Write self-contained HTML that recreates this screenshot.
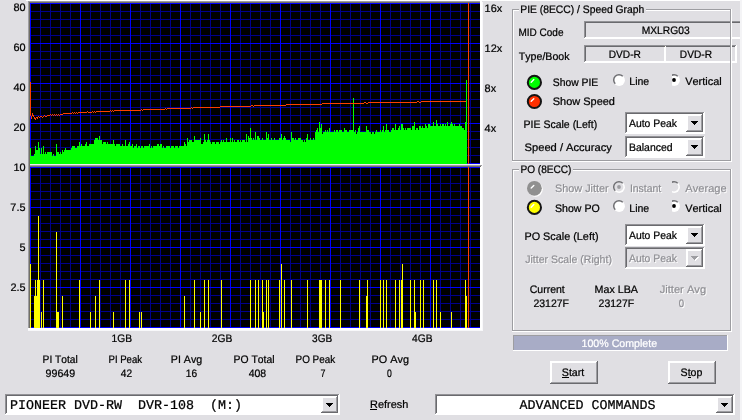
<!DOCTYPE html>
<html><head><meta charset="utf-8"><title>PIE / PO scan</title>
<style>
html,body{margin:0;padding:0;background:#e0dfe3;overflow:hidden}
body{width:742px;height:420px;position:relative;font-family:"Liberation Sans", sans-serif;}
svg{position:absolute;left:0;top:0;display:block;will-change:transform}
text{font-kerning:none;paint-order:stroke;stroke-width:0.24px;stroke:currentColor}
text.d{stroke-width:0.05px}
text.e{stroke-width:0.2px}
</style></head><body>
<svg width="742" height="420" viewBox="0 0 742 420" shape-rendering="crispEdges" text-rendering="geometricPrecision">
<rect x="26" y="0" width="716" height="1" fill="#ffffff"/>
<rect x="28" y="1" width="454" height="1" fill="#9d9da1"/>
<rect x="28" y="1" width="1" height="164" fill="#9d9da1"/>
<rect x="29" y="2" width="452" height="1" fill="#716f64"/>
<rect x="29" y="2" width="1" height="163" fill="#716f64"/>
<rect x="30" y="3" width="450" height="161" fill="#000000"/>
<rect x="30" y="11" width="450" height="1" fill="#00008c"/>
<rect x="30" y="19" width="450" height="1" fill="#00008c"/>
<rect x="30" y="27" width="450" height="1" fill="#00008c"/>
<rect x="30" y="35" width="450" height="1" fill="#00008c"/>
<rect x="30" y="51" width="450" height="1" fill="#00008c"/>
<rect x="30" y="59" width="450" height="1" fill="#00008c"/>
<rect x="30" y="67" width="450" height="1" fill="#00008c"/>
<rect x="30" y="75" width="450" height="1" fill="#00008c"/>
<rect x="30" y="91" width="450" height="1" fill="#00008c"/>
<rect x="30" y="99" width="450" height="1" fill="#00008c"/>
<rect x="30" y="107" width="450" height="1" fill="#00008c"/>
<rect x="30" y="115" width="450" height="1" fill="#00008c"/>
<rect x="30" y="131" width="450" height="1" fill="#00008c"/>
<rect x="30" y="139" width="450" height="1" fill="#00008c"/>
<rect x="30" y="147" width="450" height="1" fill="#00008c"/>
<rect x="30" y="155" width="450" height="1" fill="#00008c"/>
<rect x="40" y="3" width="1" height="161" fill="#00008c"/>
<rect x="50" y="3" width="1" height="161" fill="#00008c"/>
<rect x="60" y="3" width="1" height="161" fill="#00008c"/>
<rect x="70" y="3" width="1" height="161" fill="#00008c"/>
<rect x="90" y="3" width="1" height="161" fill="#00008c"/>
<rect x="100" y="3" width="1" height="161" fill="#00008c"/>
<rect x="110" y="3" width="1" height="161" fill="#00008c"/>
<rect x="120" y="3" width="1" height="161" fill="#00008c"/>
<rect x="140" y="3" width="1" height="161" fill="#00008c"/>
<rect x="150" y="3" width="1" height="161" fill="#00008c"/>
<rect x="160" y="3" width="1" height="161" fill="#00008c"/>
<rect x="170" y="3" width="1" height="161" fill="#00008c"/>
<rect x="190" y="3" width="1" height="161" fill="#00008c"/>
<rect x="200" y="3" width="1" height="161" fill="#00008c"/>
<rect x="210" y="3" width="1" height="161" fill="#00008c"/>
<rect x="220" y="3" width="1" height="161" fill="#00008c"/>
<rect x="240" y="3" width="1" height="161" fill="#00008c"/>
<rect x="250" y="3" width="1" height="161" fill="#00008c"/>
<rect x="260" y="3" width="1" height="161" fill="#00008c"/>
<rect x="270" y="3" width="1" height="161" fill="#00008c"/>
<rect x="290" y="3" width="1" height="161" fill="#00008c"/>
<rect x="300" y="3" width="1" height="161" fill="#00008c"/>
<rect x="310" y="3" width="1" height="161" fill="#00008c"/>
<rect x="320" y="3" width="1" height="161" fill="#00008c"/>
<rect x="340" y="3" width="1" height="161" fill="#00008c"/>
<rect x="350" y="3" width="1" height="161" fill="#00008c"/>
<rect x="360" y="3" width="1" height="161" fill="#00008c"/>
<rect x="370" y="3" width="1" height="161" fill="#00008c"/>
<rect x="390" y="3" width="1" height="161" fill="#00008c"/>
<rect x="400" y="3" width="1" height="161" fill="#00008c"/>
<rect x="410" y="3" width="1" height="161" fill="#00008c"/>
<rect x="420" y="3" width="1" height="161" fill="#00008c"/>
<rect x="440" y="3" width="1" height="161" fill="#00008c"/>
<rect x="450" y="3" width="1" height="161" fill="#00008c"/>
<rect x="460" y="3" width="1" height="161" fill="#00008c"/>
<rect x="470" y="3" width="1" height="161" fill="#00008c"/>
<rect x="30" y="3" width="450" height="1" fill="#0000ff"/>
<rect x="30" y="43" width="450" height="1" fill="#0000ff"/>
<rect x="30" y="83" width="450" height="1" fill="#0000ff"/>
<rect x="30" y="123" width="450" height="1" fill="#0000ff"/>
<rect x="30" y="163" width="450" height="1" fill="#0000ff"/>
<rect x="30" y="3" width="1" height="161" fill="#0000ff"/>
<rect x="80" y="3" width="1" height="161" fill="#0000ff"/>
<rect x="130" y="3" width="1" height="161" fill="#0000ff"/>
<rect x="180" y="3" width="1" height="161" fill="#0000ff"/>
<rect x="230" y="3" width="1" height="161" fill="#0000ff"/>
<rect x="280" y="3" width="1" height="161" fill="#0000ff"/>
<rect x="330" y="3" width="1" height="161" fill="#0000ff"/>
<rect x="380" y="3" width="1" height="161" fill="#0000ff"/>
<rect x="430" y="3" width="1" height="161" fill="#0000ff"/>
<rect x="28" y="165" width="454" height="1" fill="#9d9da1"/>
<rect x="28" y="165" width="1" height="164" fill="#9d9da1"/>
<rect x="29" y="166" width="452" height="1" fill="#716f64"/>
<rect x="29" y="166" width="1" height="163" fill="#716f64"/>
<rect x="30" y="167" width="450" height="161" fill="#000000"/>
<rect x="30" y="175" width="450" height="1" fill="#00008c"/>
<rect x="30" y="183" width="450" height="1" fill="#00008c"/>
<rect x="30" y="191" width="450" height="1" fill="#00008c"/>
<rect x="30" y="199" width="450" height="1" fill="#00008c"/>
<rect x="30" y="215" width="450" height="1" fill="#00008c"/>
<rect x="30" y="223" width="450" height="1" fill="#00008c"/>
<rect x="30" y="231" width="450" height="1" fill="#00008c"/>
<rect x="30" y="239" width="450" height="1" fill="#00008c"/>
<rect x="30" y="255" width="450" height="1" fill="#00008c"/>
<rect x="30" y="263" width="450" height="1" fill="#00008c"/>
<rect x="30" y="271" width="450" height="1" fill="#00008c"/>
<rect x="30" y="279" width="450" height="1" fill="#00008c"/>
<rect x="30" y="295" width="450" height="1" fill="#00008c"/>
<rect x="30" y="303" width="450" height="1" fill="#00008c"/>
<rect x="30" y="311" width="450" height="1" fill="#00008c"/>
<rect x="30" y="319" width="450" height="1" fill="#00008c"/>
<rect x="40" y="167" width="1" height="161" fill="#00008c"/>
<rect x="50" y="167" width="1" height="161" fill="#00008c"/>
<rect x="60" y="167" width="1" height="161" fill="#00008c"/>
<rect x="70" y="167" width="1" height="161" fill="#00008c"/>
<rect x="90" y="167" width="1" height="161" fill="#00008c"/>
<rect x="100" y="167" width="1" height="161" fill="#00008c"/>
<rect x="110" y="167" width="1" height="161" fill="#00008c"/>
<rect x="120" y="167" width="1" height="161" fill="#00008c"/>
<rect x="140" y="167" width="1" height="161" fill="#00008c"/>
<rect x="150" y="167" width="1" height="161" fill="#00008c"/>
<rect x="160" y="167" width="1" height="161" fill="#00008c"/>
<rect x="170" y="167" width="1" height="161" fill="#00008c"/>
<rect x="190" y="167" width="1" height="161" fill="#00008c"/>
<rect x="200" y="167" width="1" height="161" fill="#00008c"/>
<rect x="210" y="167" width="1" height="161" fill="#00008c"/>
<rect x="220" y="167" width="1" height="161" fill="#00008c"/>
<rect x="240" y="167" width="1" height="161" fill="#00008c"/>
<rect x="250" y="167" width="1" height="161" fill="#00008c"/>
<rect x="260" y="167" width="1" height="161" fill="#00008c"/>
<rect x="270" y="167" width="1" height="161" fill="#00008c"/>
<rect x="290" y="167" width="1" height="161" fill="#00008c"/>
<rect x="300" y="167" width="1" height="161" fill="#00008c"/>
<rect x="310" y="167" width="1" height="161" fill="#00008c"/>
<rect x="320" y="167" width="1" height="161" fill="#00008c"/>
<rect x="340" y="167" width="1" height="161" fill="#00008c"/>
<rect x="350" y="167" width="1" height="161" fill="#00008c"/>
<rect x="360" y="167" width="1" height="161" fill="#00008c"/>
<rect x="370" y="167" width="1" height="161" fill="#00008c"/>
<rect x="390" y="167" width="1" height="161" fill="#00008c"/>
<rect x="400" y="167" width="1" height="161" fill="#00008c"/>
<rect x="410" y="167" width="1" height="161" fill="#00008c"/>
<rect x="420" y="167" width="1" height="161" fill="#00008c"/>
<rect x="440" y="167" width="1" height="161" fill="#00008c"/>
<rect x="450" y="167" width="1" height="161" fill="#00008c"/>
<rect x="460" y="167" width="1" height="161" fill="#00008c"/>
<rect x="470" y="167" width="1" height="161" fill="#00008c"/>
<rect x="30" y="167" width="450" height="1" fill="#0000ff"/>
<rect x="30" y="207" width="450" height="1" fill="#0000ff"/>
<rect x="30" y="247" width="450" height="1" fill="#0000ff"/>
<rect x="30" y="287" width="450" height="1" fill="#0000ff"/>
<rect x="30" y="327" width="450" height="1" fill="#0000ff"/>
<rect x="30" y="167" width="1" height="161" fill="#0000ff"/>
<rect x="80" y="167" width="1" height="161" fill="#0000ff"/>
<rect x="130" y="167" width="1" height="161" fill="#0000ff"/>
<rect x="180" y="167" width="1" height="161" fill="#0000ff"/>
<rect x="230" y="167" width="1" height="161" fill="#0000ff"/>
<rect x="280" y="167" width="1" height="161" fill="#0000ff"/>
<rect x="330" y="167" width="1" height="161" fill="#0000ff"/>
<rect x="380" y="167" width="1" height="161" fill="#0000ff"/>
<rect x="430" y="167" width="1" height="161" fill="#0000ff"/>
<rect x="480" y="1" width="2" height="330" fill="#ffffff"/>
<rect x="482" y="2" width="1" height="329" fill="#f8f8fa"/>
<rect x="28" y="330" width="455" height="1" fill="#f8f8fa"/>
<rect x="30" y="164" width="450" height="1" fill="#ececee"/>
<rect x="480" y="165" width="2" height="1" fill="#9d9da1"/>
<rect x="480" y="166" width="1" height="1" fill="#716f64"/>
<rect x="28" y="1" width="1" height="328" fill="#9d9da1"/>
<rect x="29" y="2" width="1" height="326" fill="#716f64"/>
<rect x="28" y="328" width="454" height="2" fill="#ffffff"/>
<rect x="30" y="148" width="1" height="16" fill="#00ff00"/>
<rect x="31" y="156" width="1" height="8" fill="#00ff00"/>
<rect x="32" y="156" width="1" height="8" fill="#00ff00"/>
<rect x="33" y="156" width="1" height="8" fill="#00ff00"/>
<rect x="34" y="154" width="1" height="10" fill="#00ff00"/>
<rect x="35" y="146" width="1" height="18" fill="#00ff00"/>
<rect x="36" y="150" width="1" height="14" fill="#00ff00"/>
<rect x="37" y="150" width="1" height="14" fill="#00ff00"/>
<rect x="38" y="142" width="1" height="22" fill="#00ff00"/>
<rect x="39" y="148" width="1" height="16" fill="#00ff00"/>
<rect x="40" y="154" width="1" height="10" fill="#00ff00"/>
<rect x="41" y="148" width="1" height="16" fill="#00ff00"/>
<rect x="42" y="154" width="1" height="10" fill="#00ff00"/>
<rect x="43" y="146" width="1" height="18" fill="#00ff00"/>
<rect x="44" y="154" width="1" height="10" fill="#00ff00"/>
<rect x="45" y="152" width="1" height="12" fill="#00ff00"/>
<rect x="46" y="154" width="1" height="10" fill="#00ff00"/>
<rect x="47" y="152" width="1" height="12" fill="#00ff00"/>
<rect x="48" y="152" width="1" height="12" fill="#00ff00"/>
<rect x="49" y="152" width="1" height="12" fill="#00ff00"/>
<rect x="50" y="152" width="1" height="12" fill="#00ff00"/>
<rect x="51" y="152" width="1" height="12" fill="#00ff00"/>
<rect x="52" y="156" width="1" height="8" fill="#00ff00"/>
<rect x="53" y="154" width="1" height="10" fill="#00ff00"/>
<rect x="54" y="156" width="1" height="8" fill="#00ff00"/>
<rect x="55" y="156" width="1" height="8" fill="#00ff00"/>
<rect x="56" y="144" width="1" height="20" fill="#00ff00"/>
<rect x="57" y="152" width="1" height="12" fill="#00ff00"/>
<rect x="58" y="152" width="1" height="12" fill="#00ff00"/>
<rect x="59" y="154" width="1" height="10" fill="#00ff00"/>
<rect x="60" y="152" width="1" height="12" fill="#00ff00"/>
<rect x="61" y="154" width="1" height="10" fill="#00ff00"/>
<rect x="62" y="150" width="1" height="14" fill="#00ff00"/>
<rect x="63" y="152" width="1" height="12" fill="#00ff00"/>
<rect x="64" y="150" width="1" height="14" fill="#00ff00"/>
<rect x="65" y="148" width="1" height="16" fill="#00ff00"/>
<rect x="66" y="150" width="1" height="14" fill="#00ff00"/>
<rect x="67" y="150" width="1" height="14" fill="#00ff00"/>
<rect x="68" y="150" width="1" height="14" fill="#00ff00"/>
<rect x="69" y="150" width="1" height="14" fill="#00ff00"/>
<rect x="70" y="150" width="1" height="14" fill="#00ff00"/>
<rect x="71" y="148" width="1" height="16" fill="#00ff00"/>
<rect x="72" y="146" width="1" height="18" fill="#00ff00"/>
<rect x="73" y="146" width="1" height="18" fill="#00ff00"/>
<rect x="74" y="146" width="1" height="18" fill="#00ff00"/>
<rect x="75" y="148" width="1" height="16" fill="#00ff00"/>
<rect x="76" y="148" width="1" height="16" fill="#00ff00"/>
<rect x="77" y="146" width="1" height="18" fill="#00ff00"/>
<rect x="78" y="146" width="1" height="18" fill="#00ff00"/>
<rect x="79" y="142" width="1" height="22" fill="#00ff00"/>
<rect x="80" y="146" width="1" height="18" fill="#00ff00"/>
<rect x="81" y="144" width="1" height="20" fill="#00ff00"/>
<rect x="82" y="146" width="1" height="18" fill="#00ff00"/>
<rect x="83" y="146" width="1" height="18" fill="#00ff00"/>
<rect x="84" y="146" width="1" height="18" fill="#00ff00"/>
<rect x="85" y="144" width="1" height="20" fill="#00ff00"/>
<rect x="86" y="142" width="1" height="22" fill="#00ff00"/>
<rect x="87" y="146" width="1" height="18" fill="#00ff00"/>
<rect x="88" y="146" width="1" height="18" fill="#00ff00"/>
<rect x="89" y="144" width="1" height="20" fill="#00ff00"/>
<rect x="90" y="144" width="1" height="20" fill="#00ff00"/>
<rect x="91" y="144" width="1" height="20" fill="#00ff00"/>
<rect x="92" y="144" width="1" height="20" fill="#00ff00"/>
<rect x="93" y="144" width="1" height="20" fill="#00ff00"/>
<rect x="94" y="140" width="1" height="24" fill="#00ff00"/>
<rect x="95" y="138" width="1" height="26" fill="#00ff00"/>
<rect x="96" y="138" width="1" height="26" fill="#00ff00"/>
<rect x="97" y="138" width="1" height="26" fill="#00ff00"/>
<rect x="98" y="140" width="1" height="24" fill="#00ff00"/>
<rect x="99" y="136" width="1" height="28" fill="#00ff00"/>
<rect x="100" y="140" width="1" height="24" fill="#00ff00"/>
<rect x="101" y="140" width="1" height="24" fill="#00ff00"/>
<rect x="102" y="144" width="1" height="20" fill="#00ff00"/>
<rect x="103" y="142" width="1" height="22" fill="#00ff00"/>
<rect x="104" y="142" width="1" height="22" fill="#00ff00"/>
<rect x="105" y="142" width="1" height="22" fill="#00ff00"/>
<rect x="106" y="144" width="1" height="20" fill="#00ff00"/>
<rect x="107" y="142" width="1" height="22" fill="#00ff00"/>
<rect x="108" y="144" width="1" height="20" fill="#00ff00"/>
<rect x="109" y="144" width="1" height="20" fill="#00ff00"/>
<rect x="110" y="144" width="1" height="20" fill="#00ff00"/>
<rect x="111" y="144" width="1" height="20" fill="#00ff00"/>
<rect x="112" y="144" width="1" height="20" fill="#00ff00"/>
<rect x="113" y="140" width="1" height="24" fill="#00ff00"/>
<rect x="114" y="144" width="1" height="20" fill="#00ff00"/>
<rect x="115" y="146" width="1" height="18" fill="#00ff00"/>
<rect x="116" y="144" width="1" height="20" fill="#00ff00"/>
<rect x="117" y="144" width="1" height="20" fill="#00ff00"/>
<rect x="118" y="144" width="1" height="20" fill="#00ff00"/>
<rect x="119" y="144" width="1" height="20" fill="#00ff00"/>
<rect x="120" y="146" width="1" height="18" fill="#00ff00"/>
<rect x="121" y="146" width="1" height="18" fill="#00ff00"/>
<rect x="122" y="144" width="1" height="20" fill="#00ff00"/>
<rect x="123" y="146" width="1" height="18" fill="#00ff00"/>
<rect x="124" y="146" width="1" height="18" fill="#00ff00"/>
<rect x="125" y="140" width="1" height="24" fill="#00ff00"/>
<rect x="126" y="146" width="1" height="18" fill="#00ff00"/>
<rect x="127" y="146" width="1" height="18" fill="#00ff00"/>
<rect x="128" y="144" width="1" height="20" fill="#00ff00"/>
<rect x="129" y="142" width="1" height="22" fill="#00ff00"/>
<rect x="130" y="146" width="1" height="18" fill="#00ff00"/>
<rect x="131" y="146" width="1" height="18" fill="#00ff00"/>
<rect x="132" y="144" width="1" height="20" fill="#00ff00"/>
<rect x="133" y="148" width="1" height="16" fill="#00ff00"/>
<rect x="134" y="146" width="1" height="18" fill="#00ff00"/>
<rect x="135" y="146" width="1" height="18" fill="#00ff00"/>
<rect x="136" y="144" width="1" height="20" fill="#00ff00"/>
<rect x="137" y="148" width="1" height="16" fill="#00ff00"/>
<rect x="138" y="146" width="1" height="18" fill="#00ff00"/>
<rect x="139" y="146" width="1" height="18" fill="#00ff00"/>
<rect x="140" y="148" width="1" height="16" fill="#00ff00"/>
<rect x="141" y="146" width="1" height="18" fill="#00ff00"/>
<rect x="142" y="146" width="1" height="18" fill="#00ff00"/>
<rect x="143" y="148" width="1" height="16" fill="#00ff00"/>
<rect x="144" y="146" width="1" height="18" fill="#00ff00"/>
<rect x="145" y="146" width="1" height="18" fill="#00ff00"/>
<rect x="146" y="146" width="1" height="18" fill="#00ff00"/>
<rect x="147" y="146" width="1" height="18" fill="#00ff00"/>
<rect x="148" y="146" width="1" height="18" fill="#00ff00"/>
<rect x="149" y="144" width="1" height="20" fill="#00ff00"/>
<rect x="150" y="148" width="1" height="16" fill="#00ff00"/>
<rect x="151" y="146" width="1" height="18" fill="#00ff00"/>
<rect x="152" y="148" width="1" height="16" fill="#00ff00"/>
<rect x="153" y="146" width="1" height="18" fill="#00ff00"/>
<rect x="154" y="146" width="1" height="18" fill="#00ff00"/>
<rect x="155" y="146" width="1" height="18" fill="#00ff00"/>
<rect x="156" y="146" width="1" height="18" fill="#00ff00"/>
<rect x="157" y="144" width="1" height="20" fill="#00ff00"/>
<rect x="158" y="144" width="1" height="20" fill="#00ff00"/>
<rect x="159" y="146" width="1" height="18" fill="#00ff00"/>
<rect x="160" y="144" width="1" height="20" fill="#00ff00"/>
<rect x="161" y="144" width="1" height="20" fill="#00ff00"/>
<rect x="162" y="148" width="1" height="16" fill="#00ff00"/>
<rect x="163" y="146" width="1" height="18" fill="#00ff00"/>
<rect x="164" y="148" width="1" height="16" fill="#00ff00"/>
<rect x="165" y="148" width="1" height="16" fill="#00ff00"/>
<rect x="166" y="146" width="1" height="18" fill="#00ff00"/>
<rect x="167" y="146" width="1" height="18" fill="#00ff00"/>
<rect x="168" y="146" width="1" height="18" fill="#00ff00"/>
<rect x="169" y="146" width="1" height="18" fill="#00ff00"/>
<rect x="170" y="148" width="1" height="16" fill="#00ff00"/>
<rect x="171" y="146" width="1" height="18" fill="#00ff00"/>
<rect x="172" y="146" width="1" height="18" fill="#00ff00"/>
<rect x="173" y="146" width="1" height="18" fill="#00ff00"/>
<rect x="174" y="148" width="1" height="16" fill="#00ff00"/>
<rect x="175" y="146" width="1" height="18" fill="#00ff00"/>
<rect x="176" y="146" width="1" height="18" fill="#00ff00"/>
<rect x="177" y="146" width="1" height="18" fill="#00ff00"/>
<rect x="178" y="148" width="1" height="16" fill="#00ff00"/>
<rect x="179" y="146" width="1" height="18" fill="#00ff00"/>
<rect x="180" y="146" width="1" height="18" fill="#00ff00"/>
<rect x="181" y="146" width="1" height="18" fill="#00ff00"/>
<rect x="182" y="146" width="1" height="18" fill="#00ff00"/>
<rect x="183" y="146" width="1" height="18" fill="#00ff00"/>
<rect x="184" y="142" width="1" height="22" fill="#00ff00"/>
<rect x="185" y="144" width="1" height="20" fill="#00ff00"/>
<rect x="186" y="146" width="1" height="18" fill="#00ff00"/>
<rect x="187" y="138" width="1" height="26" fill="#00ff00"/>
<rect x="188" y="142" width="1" height="22" fill="#00ff00"/>
<rect x="189" y="140" width="1" height="24" fill="#00ff00"/>
<rect x="190" y="140" width="1" height="24" fill="#00ff00"/>
<rect x="191" y="140" width="1" height="24" fill="#00ff00"/>
<rect x="192" y="142" width="1" height="22" fill="#00ff00"/>
<rect x="193" y="142" width="1" height="22" fill="#00ff00"/>
<rect x="194" y="136" width="1" height="28" fill="#00ff00"/>
<rect x="195" y="140" width="1" height="24" fill="#00ff00"/>
<rect x="196" y="140" width="1" height="24" fill="#00ff00"/>
<rect x="197" y="140" width="1" height="24" fill="#00ff00"/>
<rect x="198" y="140" width="1" height="24" fill="#00ff00"/>
<rect x="199" y="140" width="1" height="24" fill="#00ff00"/>
<rect x="200" y="138" width="1" height="26" fill="#00ff00"/>
<rect x="201" y="144" width="1" height="20" fill="#00ff00"/>
<rect x="202" y="144" width="1" height="20" fill="#00ff00"/>
<rect x="203" y="142" width="1" height="22" fill="#00ff00"/>
<rect x="204" y="134" width="1" height="30" fill="#00ff00"/>
<rect x="205" y="140" width="1" height="24" fill="#00ff00"/>
<rect x="206" y="142" width="1" height="22" fill="#00ff00"/>
<rect x="207" y="140" width="1" height="24" fill="#00ff00"/>
<rect x="208" y="134" width="1" height="30" fill="#00ff00"/>
<rect x="209" y="140" width="1" height="24" fill="#00ff00"/>
<rect x="210" y="142" width="1" height="22" fill="#00ff00"/>
<rect x="211" y="144" width="1" height="20" fill="#00ff00"/>
<rect x="212" y="142" width="1" height="22" fill="#00ff00"/>
<rect x="213" y="142" width="1" height="22" fill="#00ff00"/>
<rect x="214" y="142" width="1" height="22" fill="#00ff00"/>
<rect x="215" y="144" width="1" height="20" fill="#00ff00"/>
<rect x="216" y="142" width="1" height="22" fill="#00ff00"/>
<rect x="217" y="142" width="1" height="22" fill="#00ff00"/>
<rect x="218" y="142" width="1" height="22" fill="#00ff00"/>
<rect x="219" y="144" width="1" height="20" fill="#00ff00"/>
<rect x="220" y="142" width="1" height="22" fill="#00ff00"/>
<rect x="221" y="140" width="1" height="24" fill="#00ff00"/>
<rect x="222" y="142" width="1" height="22" fill="#00ff00"/>
<rect x="223" y="140" width="1" height="24" fill="#00ff00"/>
<rect x="224" y="142" width="1" height="22" fill="#00ff00"/>
<rect x="225" y="142" width="1" height="22" fill="#00ff00"/>
<rect x="226" y="138" width="1" height="26" fill="#00ff00"/>
<rect x="227" y="142" width="1" height="22" fill="#00ff00"/>
<rect x="228" y="142" width="1" height="22" fill="#00ff00"/>
<rect x="229" y="142" width="1" height="22" fill="#00ff00"/>
<rect x="230" y="138" width="1" height="26" fill="#00ff00"/>
<rect x="231" y="142" width="1" height="22" fill="#00ff00"/>
<rect x="232" y="138" width="1" height="26" fill="#00ff00"/>
<rect x="233" y="142" width="1" height="22" fill="#00ff00"/>
<rect x="234" y="140" width="1" height="24" fill="#00ff00"/>
<rect x="235" y="142" width="1" height="22" fill="#00ff00"/>
<rect x="236" y="142" width="1" height="22" fill="#00ff00"/>
<rect x="237" y="140" width="1" height="24" fill="#00ff00"/>
<rect x="238" y="140" width="1" height="24" fill="#00ff00"/>
<rect x="239" y="142" width="1" height="22" fill="#00ff00"/>
<rect x="240" y="140" width="1" height="24" fill="#00ff00"/>
<rect x="241" y="142" width="1" height="22" fill="#00ff00"/>
<rect x="242" y="140" width="1" height="24" fill="#00ff00"/>
<rect x="243" y="140" width="1" height="24" fill="#00ff00"/>
<rect x="244" y="140" width="1" height="24" fill="#00ff00"/>
<rect x="245" y="142" width="1" height="22" fill="#00ff00"/>
<rect x="246" y="134" width="1" height="30" fill="#00ff00"/>
<rect x="247" y="142" width="1" height="22" fill="#00ff00"/>
<rect x="248" y="136" width="1" height="28" fill="#00ff00"/>
<rect x="249" y="138" width="1" height="26" fill="#00ff00"/>
<rect x="250" y="128" width="1" height="36" fill="#00ff00"/>
<rect x="251" y="138" width="1" height="26" fill="#00ff00"/>
<rect x="252" y="140" width="1" height="24" fill="#00ff00"/>
<rect x="253" y="138" width="1" height="26" fill="#00ff00"/>
<rect x="254" y="140" width="1" height="24" fill="#00ff00"/>
<rect x="255" y="132" width="1" height="32" fill="#00ff00"/>
<rect x="256" y="140" width="1" height="24" fill="#00ff00"/>
<rect x="257" y="136" width="1" height="28" fill="#00ff00"/>
<rect x="258" y="136" width="1" height="28" fill="#00ff00"/>
<rect x="259" y="138" width="1" height="26" fill="#00ff00"/>
<rect x="260" y="140" width="1" height="24" fill="#00ff00"/>
<rect x="261" y="140" width="1" height="24" fill="#00ff00"/>
<rect x="262" y="138" width="1" height="26" fill="#00ff00"/>
<rect x="263" y="140" width="1" height="24" fill="#00ff00"/>
<rect x="264" y="140" width="1" height="24" fill="#00ff00"/>
<rect x="265" y="140" width="1" height="24" fill="#00ff00"/>
<rect x="266" y="132" width="1" height="32" fill="#00ff00"/>
<rect x="267" y="138" width="1" height="26" fill="#00ff00"/>
<rect x="268" y="134" width="1" height="30" fill="#00ff00"/>
<rect x="269" y="140" width="1" height="24" fill="#00ff00"/>
<rect x="270" y="140" width="1" height="24" fill="#00ff00"/>
<rect x="271" y="138" width="1" height="26" fill="#00ff00"/>
<rect x="272" y="140" width="1" height="24" fill="#00ff00"/>
<rect x="273" y="140" width="1" height="24" fill="#00ff00"/>
<rect x="274" y="138" width="1" height="26" fill="#00ff00"/>
<rect x="275" y="140" width="1" height="24" fill="#00ff00"/>
<rect x="276" y="140" width="1" height="24" fill="#00ff00"/>
<rect x="277" y="140" width="1" height="24" fill="#00ff00"/>
<rect x="278" y="140" width="1" height="24" fill="#00ff00"/>
<rect x="279" y="138" width="1" height="26" fill="#00ff00"/>
<rect x="280" y="138" width="1" height="26" fill="#00ff00"/>
<rect x="281" y="134" width="1" height="30" fill="#00ff00"/>
<rect x="282" y="140" width="1" height="24" fill="#00ff00"/>
<rect x="283" y="138" width="1" height="26" fill="#00ff00"/>
<rect x="284" y="136" width="1" height="28" fill="#00ff00"/>
<rect x="285" y="138" width="1" height="26" fill="#00ff00"/>
<rect x="286" y="140" width="1" height="24" fill="#00ff00"/>
<rect x="287" y="140" width="1" height="24" fill="#00ff00"/>
<rect x="288" y="140" width="1" height="24" fill="#00ff00"/>
<rect x="289" y="140" width="1" height="24" fill="#00ff00"/>
<rect x="290" y="142" width="1" height="22" fill="#00ff00"/>
<rect x="291" y="132" width="1" height="32" fill="#00ff00"/>
<rect x="292" y="138" width="1" height="26" fill="#00ff00"/>
<rect x="293" y="138" width="1" height="26" fill="#00ff00"/>
<rect x="294" y="140" width="1" height="24" fill="#00ff00"/>
<rect x="295" y="138" width="1" height="26" fill="#00ff00"/>
<rect x="296" y="140" width="1" height="24" fill="#00ff00"/>
<rect x="297" y="140" width="1" height="24" fill="#00ff00"/>
<rect x="298" y="138" width="1" height="26" fill="#00ff00"/>
<rect x="299" y="138" width="1" height="26" fill="#00ff00"/>
<rect x="300" y="138" width="1" height="26" fill="#00ff00"/>
<rect x="301" y="140" width="1" height="24" fill="#00ff00"/>
<rect x="302" y="140" width="1" height="24" fill="#00ff00"/>
<rect x="303" y="142" width="1" height="22" fill="#00ff00"/>
<rect x="304" y="140" width="1" height="24" fill="#00ff00"/>
<rect x="305" y="142" width="1" height="22" fill="#00ff00"/>
<rect x="306" y="138" width="1" height="26" fill="#00ff00"/>
<rect x="307" y="134" width="1" height="30" fill="#00ff00"/>
<rect x="308" y="140" width="1" height="24" fill="#00ff00"/>
<rect x="309" y="140" width="1" height="24" fill="#00ff00"/>
<rect x="310" y="138" width="1" height="26" fill="#00ff00"/>
<rect x="311" y="140" width="1" height="24" fill="#00ff00"/>
<rect x="312" y="140" width="1" height="24" fill="#00ff00"/>
<rect x="313" y="138" width="1" height="26" fill="#00ff00"/>
<rect x="314" y="140" width="1" height="24" fill="#00ff00"/>
<rect x="315" y="132" width="1" height="32" fill="#00ff00"/>
<rect x="316" y="130" width="1" height="34" fill="#00ff00"/>
<rect x="317" y="128" width="1" height="36" fill="#00ff00"/>
<rect x="318" y="132" width="1" height="32" fill="#00ff00"/>
<rect x="319" y="122" width="1" height="42" fill="#00ff00"/>
<rect x="320" y="128" width="1" height="36" fill="#00ff00"/>
<rect x="321" y="124" width="1" height="40" fill="#00ff00"/>
<rect x="322" y="134" width="1" height="30" fill="#00ff00"/>
<rect x="323" y="132" width="1" height="32" fill="#00ff00"/>
<rect x="324" y="132" width="1" height="32" fill="#00ff00"/>
<rect x="325" y="130" width="1" height="34" fill="#00ff00"/>
<rect x="326" y="132" width="1" height="32" fill="#00ff00"/>
<rect x="327" y="130" width="1" height="34" fill="#00ff00"/>
<rect x="328" y="132" width="1" height="32" fill="#00ff00"/>
<rect x="329" y="128" width="1" height="36" fill="#00ff00"/>
<rect x="330" y="132" width="1" height="32" fill="#00ff00"/>
<rect x="331" y="132" width="1" height="32" fill="#00ff00"/>
<rect x="332" y="132" width="1" height="32" fill="#00ff00"/>
<rect x="333" y="132" width="1" height="32" fill="#00ff00"/>
<rect x="334" y="130" width="1" height="34" fill="#00ff00"/>
<rect x="335" y="132" width="1" height="32" fill="#00ff00"/>
<rect x="336" y="130" width="1" height="34" fill="#00ff00"/>
<rect x="337" y="130" width="1" height="34" fill="#00ff00"/>
<rect x="338" y="132" width="1" height="32" fill="#00ff00"/>
<rect x="339" y="130" width="1" height="34" fill="#00ff00"/>
<rect x="340" y="130" width="1" height="34" fill="#00ff00"/>
<rect x="341" y="130" width="1" height="34" fill="#00ff00"/>
<rect x="342" y="132" width="1" height="32" fill="#00ff00"/>
<rect x="343" y="132" width="1" height="32" fill="#00ff00"/>
<rect x="344" y="128" width="1" height="36" fill="#00ff00"/>
<rect x="345" y="130" width="1" height="34" fill="#00ff00"/>
<rect x="346" y="130" width="1" height="34" fill="#00ff00"/>
<rect x="347" y="132" width="1" height="32" fill="#00ff00"/>
<rect x="348" y="132" width="1" height="32" fill="#00ff00"/>
<rect x="349" y="130" width="1" height="34" fill="#00ff00"/>
<rect x="350" y="130" width="1" height="34" fill="#00ff00"/>
<rect x="351" y="130" width="1" height="34" fill="#00ff00"/>
<rect x="352" y="130" width="1" height="34" fill="#00ff00"/>
<rect x="353" y="98" width="1" height="66" fill="#00ff00"/>
<rect x="354" y="132" width="1" height="32" fill="#00ff00"/>
<rect x="355" y="130" width="1" height="34" fill="#00ff00"/>
<rect x="356" y="134" width="1" height="30" fill="#00ff00"/>
<rect x="357" y="132" width="1" height="32" fill="#00ff00"/>
<rect x="358" y="128" width="1" height="36" fill="#00ff00"/>
<rect x="359" y="126" width="1" height="38" fill="#00ff00"/>
<rect x="360" y="132" width="1" height="32" fill="#00ff00"/>
<rect x="361" y="132" width="1" height="32" fill="#00ff00"/>
<rect x="362" y="132" width="1" height="32" fill="#00ff00"/>
<rect x="363" y="132" width="1" height="32" fill="#00ff00"/>
<rect x="364" y="132" width="1" height="32" fill="#00ff00"/>
<rect x="365" y="132" width="1" height="32" fill="#00ff00"/>
<rect x="366" y="126" width="1" height="38" fill="#00ff00"/>
<rect x="367" y="130" width="1" height="34" fill="#00ff00"/>
<rect x="368" y="130" width="1" height="34" fill="#00ff00"/>
<rect x="369" y="132" width="1" height="32" fill="#00ff00"/>
<rect x="370" y="132" width="1" height="32" fill="#00ff00"/>
<rect x="371" y="134" width="1" height="30" fill="#00ff00"/>
<rect x="372" y="132" width="1" height="32" fill="#00ff00"/>
<rect x="373" y="132" width="1" height="32" fill="#00ff00"/>
<rect x="374" y="134" width="1" height="30" fill="#00ff00"/>
<rect x="375" y="132" width="1" height="32" fill="#00ff00"/>
<rect x="376" y="130" width="1" height="34" fill="#00ff00"/>
<rect x="377" y="132" width="1" height="32" fill="#00ff00"/>
<rect x="378" y="132" width="1" height="32" fill="#00ff00"/>
<rect x="379" y="132" width="1" height="32" fill="#00ff00"/>
<rect x="380" y="130" width="1" height="34" fill="#00ff00"/>
<rect x="381" y="132" width="1" height="32" fill="#00ff00"/>
<rect x="382" y="130" width="1" height="34" fill="#00ff00"/>
<rect x="383" y="126" width="1" height="38" fill="#00ff00"/>
<rect x="384" y="132" width="1" height="32" fill="#00ff00"/>
<rect x="385" y="130" width="1" height="34" fill="#00ff00"/>
<rect x="386" y="124" width="1" height="40" fill="#00ff00"/>
<rect x="387" y="130" width="1" height="34" fill="#00ff00"/>
<rect x="388" y="130" width="1" height="34" fill="#00ff00"/>
<rect x="389" y="132" width="1" height="32" fill="#00ff00"/>
<rect x="390" y="132" width="1" height="32" fill="#00ff00"/>
<rect x="391" y="130" width="1" height="34" fill="#00ff00"/>
<rect x="392" y="128" width="1" height="36" fill="#00ff00"/>
<rect x="393" y="128" width="1" height="36" fill="#00ff00"/>
<rect x="394" y="130" width="1" height="34" fill="#00ff00"/>
<rect x="395" y="124" width="1" height="40" fill="#00ff00"/>
<rect x="396" y="130" width="1" height="34" fill="#00ff00"/>
<rect x="397" y="130" width="1" height="34" fill="#00ff00"/>
<rect x="398" y="128" width="1" height="36" fill="#00ff00"/>
<rect x="399" y="126" width="1" height="38" fill="#00ff00"/>
<rect x="400" y="130" width="1" height="34" fill="#00ff00"/>
<rect x="401" y="124" width="1" height="40" fill="#00ff00"/>
<rect x="402" y="124" width="1" height="40" fill="#00ff00"/>
<rect x="403" y="128" width="1" height="36" fill="#00ff00"/>
<rect x="404" y="130" width="1" height="34" fill="#00ff00"/>
<rect x="405" y="128" width="1" height="36" fill="#00ff00"/>
<rect x="406" y="130" width="1" height="34" fill="#00ff00"/>
<rect x="407" y="128" width="1" height="36" fill="#00ff00"/>
<rect x="408" y="128" width="1" height="36" fill="#00ff00"/>
<rect x="409" y="128" width="1" height="36" fill="#00ff00"/>
<rect x="410" y="128" width="1" height="36" fill="#00ff00"/>
<rect x="411" y="130" width="1" height="34" fill="#00ff00"/>
<rect x="412" y="126" width="1" height="38" fill="#00ff00"/>
<rect x="413" y="126" width="1" height="38" fill="#00ff00"/>
<rect x="414" y="122" width="1" height="42" fill="#00ff00"/>
<rect x="415" y="130" width="1" height="34" fill="#00ff00"/>
<rect x="416" y="128" width="1" height="36" fill="#00ff00"/>
<rect x="417" y="128" width="1" height="36" fill="#00ff00"/>
<rect x="418" y="130" width="1" height="34" fill="#00ff00"/>
<rect x="419" y="126" width="1" height="38" fill="#00ff00"/>
<rect x="420" y="126" width="1" height="38" fill="#00ff00"/>
<rect x="421" y="128" width="1" height="36" fill="#00ff00"/>
<rect x="422" y="126" width="1" height="38" fill="#00ff00"/>
<rect x="423" y="128" width="1" height="36" fill="#00ff00"/>
<rect x="424" y="128" width="1" height="36" fill="#00ff00"/>
<rect x="425" y="124" width="1" height="40" fill="#00ff00"/>
<rect x="426" y="126" width="1" height="38" fill="#00ff00"/>
<rect x="427" y="128" width="1" height="36" fill="#00ff00"/>
<rect x="428" y="124" width="1" height="40" fill="#00ff00"/>
<rect x="429" y="124" width="1" height="40" fill="#00ff00"/>
<rect x="430" y="126" width="1" height="38" fill="#00ff00"/>
<rect x="431" y="126" width="1" height="38" fill="#00ff00"/>
<rect x="432" y="126" width="1" height="38" fill="#00ff00"/>
<rect x="433" y="122" width="1" height="42" fill="#00ff00"/>
<rect x="434" y="126" width="1" height="38" fill="#00ff00"/>
<rect x="435" y="126" width="1" height="38" fill="#00ff00"/>
<rect x="436" y="120" width="1" height="44" fill="#00ff00"/>
<rect x="437" y="124" width="1" height="40" fill="#00ff00"/>
<rect x="438" y="126" width="1" height="38" fill="#00ff00"/>
<rect x="439" y="126" width="1" height="38" fill="#00ff00"/>
<rect x="440" y="124" width="1" height="40" fill="#00ff00"/>
<rect x="441" y="126" width="1" height="38" fill="#00ff00"/>
<rect x="442" y="124" width="1" height="40" fill="#00ff00"/>
<rect x="443" y="124" width="1" height="40" fill="#00ff00"/>
<rect x="444" y="126" width="1" height="38" fill="#00ff00"/>
<rect x="445" y="124" width="1" height="40" fill="#00ff00"/>
<rect x="446" y="126" width="1" height="38" fill="#00ff00"/>
<rect x="447" y="122" width="1" height="42" fill="#00ff00"/>
<rect x="448" y="126" width="1" height="38" fill="#00ff00"/>
<rect x="449" y="126" width="1" height="38" fill="#00ff00"/>
<rect x="450" y="124" width="1" height="40" fill="#00ff00"/>
<rect x="451" y="122" width="1" height="42" fill="#00ff00"/>
<rect x="452" y="124" width="1" height="40" fill="#00ff00"/>
<rect x="453" y="126" width="1" height="38" fill="#00ff00"/>
<rect x="454" y="124" width="1" height="40" fill="#00ff00"/>
<rect x="455" y="126" width="1" height="38" fill="#00ff00"/>
<rect x="456" y="126" width="1" height="38" fill="#00ff00"/>
<rect x="457" y="126" width="1" height="38" fill="#00ff00"/>
<rect x="458" y="126" width="1" height="38" fill="#00ff00"/>
<rect x="459" y="124" width="1" height="40" fill="#00ff00"/>
<rect x="460" y="126" width="1" height="38" fill="#00ff00"/>
<rect x="461" y="126" width="1" height="38" fill="#00ff00"/>
<rect x="462" y="128" width="1" height="36" fill="#00ff00"/>
<rect x="463" y="128" width="1" height="36" fill="#00ff00"/>
<rect x="464" y="130" width="1" height="34" fill="#00ff00"/>
<rect x="465" y="122" width="1" height="42" fill="#00ff00"/>
<rect x="466" y="80" width="1" height="84" fill="#00ff00"/>
<rect x="30" y="82" width="1" height="34" fill="#ff4000"/>
<rect x="31" y="116" width="1" height="3" fill="#ff4000"/>
<rect x="32" y="113" width="1" height="3" fill="#ff4000"/>
<rect x="33" y="115" width="1" height="2" fill="#ff4000"/>
<rect x="34" y="117" width="1" height="2" fill="#ff4000"/>
<rect x="35" y="118" width="1" height="2" fill="#ff4000"/>
<rect x="36" y="117" width="1" height="1" fill="#ff4000"/>
<rect x="37" y="117" width="1" height="2" fill="#ff4000"/>
<rect x="38" y="116" width="1" height="1" fill="#ff4000"/>
<rect x="39" y="117" width="1" height="1" fill="#ff4000"/>
<rect x="40" y="116" width="1" height="1" fill="#ff4000"/>
<rect x="41" y="116" width="1" height="1" fill="#ff4000"/>
<rect x="42" y="117" width="1" height="1" fill="#ff4000"/>
<rect x="43" y="116" width="1" height="1" fill="#ff4000"/>
<rect x="44" y="115" width="1" height="1" fill="#ff4000"/>
<rect x="45" y="116" width="1" height="1" fill="#ff4000"/>
<rect x="46" y="116" width="1" height="1" fill="#ff4000"/>
<rect x="47" y="115" width="1" height="1" fill="#ff4000"/>
<rect x="48" y="115" width="1" height="1" fill="#ff4000"/>
<rect x="49" y="115" width="1" height="1" fill="#ff4000"/>
<rect x="50" y="114" width="1" height="1" fill="#ff4000"/>
<rect x="51" y="115" width="1" height="1" fill="#ff4000"/>
<rect x="52" y="114" width="1" height="1" fill="#ff4000"/>
<rect x="53" y="115" width="1" height="1" fill="#ff4000"/>
<rect x="54" y="114" width="1" height="1" fill="#ff4000"/>
<rect x="55" y="115" width="1" height="1" fill="#ff4000"/>
<rect x="56" y="114" width="1" height="1" fill="#ff4000"/>
<rect x="57" y="115" width="1" height="1" fill="#ff4000"/>
<rect x="58" y="114" width="1" height="1" fill="#ff4000"/>
<rect x="59" y="115" width="1" height="1" fill="#ff4000"/>
<rect x="60" y="114" width="1" height="1" fill="#ff4000"/>
<rect x="61" y="114" width="1" height="1" fill="#ff4000"/>
<rect x="62" y="114" width="1" height="1" fill="#ff4000"/>
<rect x="63" y="113" width="1" height="1" fill="#ff4000"/>
<rect x="64" y="113" width="1" height="1" fill="#ff4000"/>
<rect x="65" y="113" width="1" height="1" fill="#ff4000"/>
<rect x="66" y="113" width="1" height="1" fill="#ff4000"/>
<rect x="67" y="113" width="1" height="1" fill="#ff4000"/>
<rect x="68" y="113" width="1" height="1" fill="#ff4000"/>
<rect x="69" y="113" width="1" height="1" fill="#ff4000"/>
<rect x="70" y="113" width="1" height="1" fill="#ff4000"/>
<rect x="71" y="113" width="1" height="1" fill="#ff4000"/>
<rect x="72" y="112" width="1" height="1" fill="#ff4000"/>
<rect x="73" y="113" width="1" height="1" fill="#ff4000"/>
<rect x="74" y="112" width="1" height="1" fill="#ff4000"/>
<rect x="75" y="113" width="1" height="1" fill="#ff4000"/>
<rect x="76" y="112" width="1" height="1" fill="#ff4000"/>
<rect x="77" y="113" width="1" height="1" fill="#ff4000"/>
<rect x="78" y="112" width="1" height="1" fill="#ff4000"/>
<rect x="79" y="112" width="1" height="1" fill="#ff4000"/>
<rect x="80" y="112" width="1" height="1" fill="#ff4000"/>
<rect x="81" y="112" width="1" height="1" fill="#ff4000"/>
<rect x="82" y="112" width="1" height="1" fill="#ff4000"/>
<rect x="83" y="112" width="1" height="1" fill="#ff4000"/>
<rect x="84" y="112" width="1" height="1" fill="#ff4000"/>
<rect x="85" y="112" width="1" height="1" fill="#ff4000"/>
<rect x="86" y="112" width="1" height="1" fill="#ff4000"/>
<rect x="87" y="111" width="1" height="1" fill="#ff4000"/>
<rect x="88" y="112" width="1" height="1" fill="#ff4000"/>
<rect x="89" y="112" width="1" height="1" fill="#ff4000"/>
<rect x="90" y="112" width="1" height="1" fill="#ff4000"/>
<rect x="91" y="112" width="1" height="1" fill="#ff4000"/>
<rect x="92" y="111" width="1" height="1" fill="#ff4000"/>
<rect x="93" y="112" width="1" height="1" fill="#ff4000"/>
<rect x="94" y="111" width="1" height="1" fill="#ff4000"/>
<rect x="95" y="112" width="1" height="1" fill="#ff4000"/>
<rect x="96" y="111" width="1" height="1" fill="#ff4000"/>
<rect x="97" y="111" width="1" height="1" fill="#ff4000"/>
<rect x="98" y="111" width="1" height="1" fill="#ff4000"/>
<rect x="99" y="111" width="1" height="1" fill="#ff4000"/>
<rect x="100" y="111" width="1" height="1" fill="#ff4000"/>
<rect x="101" y="111" width="1" height="1" fill="#ff4000"/>
<rect x="102" y="111" width="1" height="1" fill="#ff4000"/>
<rect x="103" y="111" width="1" height="1" fill="#ff4000"/>
<rect x="104" y="111" width="1" height="1" fill="#ff4000"/>
<rect x="105" y="111" width="1" height="1" fill="#ff4000"/>
<rect x="106" y="111" width="1" height="1" fill="#ff4000"/>
<rect x="107" y="111" width="1" height="1" fill="#ff4000"/>
<rect x="108" y="111" width="1" height="1" fill="#ff4000"/>
<rect x="109" y="111" width="1" height="1" fill="#ff4000"/>
<rect x="110" y="110" width="1" height="1" fill="#ff4000"/>
<rect x="111" y="111" width="1" height="1" fill="#ff4000"/>
<rect x="112" y="110" width="1" height="1" fill="#ff4000"/>
<rect x="113" y="111" width="1" height="1" fill="#ff4000"/>
<rect x="114" y="110" width="1" height="1" fill="#ff4000"/>
<rect x="115" y="110" width="1" height="1" fill="#ff4000"/>
<rect x="116" y="110" width="1" height="1" fill="#ff4000"/>
<rect x="117" y="110" width="1" height="1" fill="#ff4000"/>
<rect x="118" y="110" width="1" height="1" fill="#ff4000"/>
<rect x="119" y="110" width="1" height="1" fill="#ff4000"/>
<rect x="120" y="110" width="1" height="1" fill="#ff4000"/>
<rect x="121" y="110" width="1" height="1" fill="#ff4000"/>
<rect x="122" y="110" width="1" height="1" fill="#ff4000"/>
<rect x="123" y="110" width="1" height="1" fill="#ff4000"/>
<rect x="124" y="110" width="1" height="1" fill="#ff4000"/>
<rect x="125" y="110" width="1" height="1" fill="#ff4000"/>
<rect x="126" y="110" width="1" height="1" fill="#ff4000"/>
<rect x="127" y="110" width="1" height="1" fill="#ff4000"/>
<rect x="128" y="110" width="1" height="1" fill="#ff4000"/>
<rect x="129" y="110" width="1" height="1" fill="#ff4000"/>
<rect x="130" y="110" width="1" height="1" fill="#ff4000"/>
<rect x="131" y="110" width="1" height="1" fill="#ff4000"/>
<rect x="132" y="110" width="1" height="1" fill="#ff4000"/>
<rect x="133" y="110" width="1" height="1" fill="#ff4000"/>
<rect x="134" y="110" width="1" height="1" fill="#ff4000"/>
<rect x="135" y="110" width="1" height="1" fill="#ff4000"/>
<rect x="136" y="110" width="1" height="1" fill="#ff4000"/>
<rect x="137" y="110" width="1" height="1" fill="#ff4000"/>
<rect x="138" y="110" width="1" height="1" fill="#ff4000"/>
<rect x="139" y="110" width="1" height="1" fill="#ff4000"/>
<rect x="140" y="110" width="1" height="1" fill="#ff4000"/>
<rect x="141" y="109" width="1" height="1" fill="#ff4000"/>
<rect x="142" y="110" width="1" height="1" fill="#ff4000"/>
<rect x="143" y="109" width="1" height="1" fill="#ff4000"/>
<rect x="144" y="109" width="1" height="1" fill="#ff4000"/>
<rect x="145" y="109" width="1" height="1" fill="#ff4000"/>
<rect x="146" y="109" width="1" height="1" fill="#ff4000"/>
<rect x="147" y="109" width="1" height="1" fill="#ff4000"/>
<rect x="148" y="109" width="1" height="1" fill="#ff4000"/>
<rect x="149" y="109" width="1" height="1" fill="#ff4000"/>
<rect x="150" y="109" width="1" height="1" fill="#ff4000"/>
<rect x="151" y="109" width="1" height="1" fill="#ff4000"/>
<rect x="152" y="109" width="1" height="1" fill="#ff4000"/>
<rect x="153" y="109" width="1" height="1" fill="#ff4000"/>
<rect x="154" y="109" width="1" height="1" fill="#ff4000"/>
<rect x="155" y="109" width="1" height="1" fill="#ff4000"/>
<rect x="156" y="109" width="1" height="1" fill="#ff4000"/>
<rect x="157" y="109" width="1" height="1" fill="#ff4000"/>
<rect x="158" y="109" width="1" height="1" fill="#ff4000"/>
<rect x="159" y="109" width="1" height="1" fill="#ff4000"/>
<rect x="160" y="109" width="1" height="1" fill="#ff4000"/>
<rect x="161" y="109" width="1" height="1" fill="#ff4000"/>
<rect x="162" y="109" width="1" height="1" fill="#ff4000"/>
<rect x="163" y="109" width="1" height="1" fill="#ff4000"/>
<rect x="164" y="109" width="1" height="1" fill="#ff4000"/>
<rect x="165" y="108" width="1" height="1" fill="#ff4000"/>
<rect x="166" y="109" width="1" height="1" fill="#ff4000"/>
<rect x="167" y="108" width="1" height="1" fill="#ff4000"/>
<rect x="168" y="108" width="1" height="1" fill="#ff4000"/>
<rect x="169" y="108" width="1" height="1" fill="#ff4000"/>
<rect x="170" y="108" width="1" height="1" fill="#ff4000"/>
<rect x="171" y="108" width="1" height="1" fill="#ff4000"/>
<rect x="172" y="108" width="1" height="1" fill="#ff4000"/>
<rect x="173" y="108" width="1" height="1" fill="#ff4000"/>
<rect x="174" y="108" width="1" height="1" fill="#ff4000"/>
<rect x="175" y="108" width="1" height="1" fill="#ff4000"/>
<rect x="176" y="108" width="1" height="1" fill="#ff4000"/>
<rect x="177" y="108" width="1" height="1" fill="#ff4000"/>
<rect x="178" y="108" width="1" height="1" fill="#ff4000"/>
<rect x="179" y="108" width="1" height="1" fill="#ff4000"/>
<rect x="180" y="108" width="1" height="1" fill="#ff4000"/>
<rect x="181" y="108" width="1" height="1" fill="#ff4000"/>
<rect x="182" y="108" width="1" height="1" fill="#ff4000"/>
<rect x="183" y="108" width="1" height="1" fill="#ff4000"/>
<rect x="184" y="108" width="1" height="1" fill="#ff4000"/>
<rect x="185" y="108" width="1" height="1" fill="#ff4000"/>
<rect x="186" y="108" width="1" height="1" fill="#ff4000"/>
<rect x="187" y="108" width="1" height="1" fill="#ff4000"/>
<rect x="188" y="108" width="1" height="1" fill="#ff4000"/>
<rect x="189" y="108" width="1" height="1" fill="#ff4000"/>
<rect x="190" y="108" width="1" height="1" fill="#ff4000"/>
<rect x="191" y="107" width="1" height="1" fill="#ff4000"/>
<rect x="192" y="108" width="1" height="1" fill="#ff4000"/>
<rect x="193" y="107" width="1" height="1" fill="#ff4000"/>
<rect x="194" y="107" width="1" height="1" fill="#ff4000"/>
<rect x="195" y="107" width="1" height="1" fill="#ff4000"/>
<rect x="196" y="107" width="1" height="1" fill="#ff4000"/>
<rect x="197" y="107" width="1" height="1" fill="#ff4000"/>
<rect x="198" y="107" width="1" height="1" fill="#ff4000"/>
<rect x="199" y="107" width="1" height="1" fill="#ff4000"/>
<rect x="200" y="107" width="1" height="1" fill="#ff4000"/>
<rect x="201" y="107" width="1" height="1" fill="#ff4000"/>
<rect x="202" y="107" width="1" height="1" fill="#ff4000"/>
<rect x="203" y="107" width="1" height="1" fill="#ff4000"/>
<rect x="204" y="107" width="1" height="1" fill="#ff4000"/>
<rect x="205" y="107" width="1" height="1" fill="#ff4000"/>
<rect x="206" y="107" width="1" height="1" fill="#ff4000"/>
<rect x="207" y="107" width="1" height="1" fill="#ff4000"/>
<rect x="208" y="107" width="1" height="1" fill="#ff4000"/>
<rect x="209" y="107" width="1" height="1" fill="#ff4000"/>
<rect x="210" y="107" width="1" height="1" fill="#ff4000"/>
<rect x="211" y="107" width="1" height="1" fill="#ff4000"/>
<rect x="212" y="107" width="1" height="1" fill="#ff4000"/>
<rect x="213" y="107" width="1" height="1" fill="#ff4000"/>
<rect x="214" y="107" width="1" height="1" fill="#ff4000"/>
<rect x="215" y="107" width="1" height="1" fill="#ff4000"/>
<rect x="216" y="107" width="1" height="1" fill="#ff4000"/>
<rect x="217" y="107" width="1" height="1" fill="#ff4000"/>
<rect x="218" y="107" width="1" height="1" fill="#ff4000"/>
<rect x="219" y="107" width="1" height="1" fill="#ff4000"/>
<rect x="220" y="106" width="1" height="1" fill="#ff4000"/>
<rect x="221" y="106" width="1" height="1" fill="#ff4000"/>
<rect x="222" y="106" width="1" height="1" fill="#ff4000"/>
<rect x="223" y="106" width="1" height="1" fill="#ff4000"/>
<rect x="224" y="106" width="1" height="1" fill="#ff4000"/>
<rect x="225" y="106" width="1" height="1" fill="#ff4000"/>
<rect x="226" y="106" width="1" height="1" fill="#ff4000"/>
<rect x="227" y="106" width="1" height="1" fill="#ff4000"/>
<rect x="228" y="106" width="1" height="1" fill="#ff4000"/>
<rect x="229" y="106" width="1" height="1" fill="#ff4000"/>
<rect x="230" y="106" width="1" height="1" fill="#ff4000"/>
<rect x="231" y="106" width="1" height="1" fill="#ff4000"/>
<rect x="232" y="106" width="1" height="1" fill="#ff4000"/>
<rect x="233" y="106" width="1" height="1" fill="#ff4000"/>
<rect x="234" y="106" width="1" height="1" fill="#ff4000"/>
<rect x="235" y="106" width="1" height="1" fill="#ff4000"/>
<rect x="236" y="106" width="1" height="1" fill="#ff4000"/>
<rect x="237" y="106" width="1" height="1" fill="#ff4000"/>
<rect x="238" y="106" width="1" height="1" fill="#ff4000"/>
<rect x="239" y="106" width="1" height="1" fill="#ff4000"/>
<rect x="240" y="106" width="1" height="1" fill="#ff4000"/>
<rect x="241" y="106" width="1" height="1" fill="#ff4000"/>
<rect x="242" y="106" width="1" height="1" fill="#ff4000"/>
<rect x="243" y="106" width="1" height="1" fill="#ff4000"/>
<rect x="244" y="106" width="1" height="1" fill="#ff4000"/>
<rect x="245" y="106" width="1" height="1" fill="#ff4000"/>
<rect x="246" y="106" width="1" height="1" fill="#ff4000"/>
<rect x="247" y="106" width="1" height="1" fill="#ff4000"/>
<rect x="248" y="106" width="1" height="1" fill="#ff4000"/>
<rect x="249" y="106" width="1" height="1" fill="#ff4000"/>
<rect x="250" y="106" width="1" height="1" fill="#ff4000"/>
<rect x="251" y="105" width="1" height="1" fill="#ff4000"/>
<rect x="252" y="105" width="1" height="1" fill="#ff4000"/>
<rect x="253" y="106" width="1" height="1" fill="#ff4000"/>
<rect x="254" y="105" width="1" height="1" fill="#ff4000"/>
<rect x="255" y="105" width="1" height="1" fill="#ff4000"/>
<rect x="256" y="105" width="1" height="1" fill="#ff4000"/>
<rect x="257" y="105" width="1" height="1" fill="#ff4000"/>
<rect x="258" y="105" width="1" height="1" fill="#ff4000"/>
<rect x="259" y="105" width="1" height="1" fill="#ff4000"/>
<rect x="260" y="105" width="1" height="1" fill="#ff4000"/>
<rect x="261" y="105" width="1" height="1" fill="#ff4000"/>
<rect x="262" y="105" width="1" height="1" fill="#ff4000"/>
<rect x="263" y="105" width="1" height="1" fill="#ff4000"/>
<rect x="264" y="105" width="1" height="1" fill="#ff4000"/>
<rect x="265" y="105" width="1" height="1" fill="#ff4000"/>
<rect x="266" y="105" width="1" height="1" fill="#ff4000"/>
<rect x="267" y="105" width="1" height="1" fill="#ff4000"/>
<rect x="268" y="105" width="1" height="1" fill="#ff4000"/>
<rect x="269" y="105" width="1" height="1" fill="#ff4000"/>
<rect x="270" y="105" width="1" height="1" fill="#ff4000"/>
<rect x="271" y="105" width="1" height="1" fill="#ff4000"/>
<rect x="272" y="105" width="1" height="1" fill="#ff4000"/>
<rect x="273" y="105" width="1" height="1" fill="#ff4000"/>
<rect x="274" y="105" width="1" height="1" fill="#ff4000"/>
<rect x="275" y="105" width="1" height="1" fill="#ff4000"/>
<rect x="276" y="105" width="1" height="1" fill="#ff4000"/>
<rect x="277" y="105" width="1" height="1" fill="#ff4000"/>
<rect x="278" y="105" width="1" height="1" fill="#ff4000"/>
<rect x="279" y="105" width="1" height="1" fill="#ff4000"/>
<rect x="280" y="105" width="1" height="1" fill="#ff4000"/>
<rect x="281" y="105" width="1" height="1" fill="#ff4000"/>
<rect x="282" y="105" width="1" height="1" fill="#ff4000"/>
<rect x="283" y="105" width="1" height="1" fill="#ff4000"/>
<rect x="284" y="105" width="1" height="1" fill="#ff4000"/>
<rect x="285" y="105" width="1" height="1" fill="#ff4000"/>
<rect x="286" y="104" width="1" height="1" fill="#ff4000"/>
<rect x="287" y="104" width="1" height="1" fill="#ff4000"/>
<rect x="288" y="104" width="1" height="1" fill="#ff4000"/>
<rect x="289" y="104" width="1" height="1" fill="#ff4000"/>
<rect x="290" y="104" width="1" height="1" fill="#ff4000"/>
<rect x="291" y="104" width="1" height="1" fill="#ff4000"/>
<rect x="292" y="104" width="1" height="1" fill="#ff4000"/>
<rect x="293" y="104" width="1" height="1" fill="#ff4000"/>
<rect x="294" y="104" width="1" height="1" fill="#ff4000"/>
<rect x="295" y="104" width="1" height="1" fill="#ff4000"/>
<rect x="296" y="104" width="1" height="1" fill="#ff4000"/>
<rect x="297" y="104" width="1" height="1" fill="#ff4000"/>
<rect x="298" y="104" width="1" height="1" fill="#ff4000"/>
<rect x="299" y="104" width="1" height="1" fill="#ff4000"/>
<rect x="300" y="104" width="1" height="1" fill="#ff4000"/>
<rect x="301" y="104" width="1" height="1" fill="#ff4000"/>
<rect x="302" y="104" width="1" height="1" fill="#ff4000"/>
<rect x="303" y="104" width="1" height="1" fill="#ff4000"/>
<rect x="304" y="104" width="1" height="1" fill="#ff4000"/>
<rect x="305" y="104" width="1" height="1" fill="#ff4000"/>
<rect x="306" y="104" width="1" height="1" fill="#ff4000"/>
<rect x="307" y="104" width="1" height="1" fill="#ff4000"/>
<rect x="308" y="104" width="1" height="1" fill="#ff4000"/>
<rect x="309" y="104" width="1" height="1" fill="#ff4000"/>
<rect x="310" y="104" width="1" height="1" fill="#ff4000"/>
<rect x="311" y="104" width="1" height="1" fill="#ff4000"/>
<rect x="312" y="104" width="1" height="1" fill="#ff4000"/>
<rect x="313" y="104" width="1" height="1" fill="#ff4000"/>
<rect x="314" y="104" width="1" height="1" fill="#ff4000"/>
<rect x="315" y="104" width="1" height="1" fill="#ff4000"/>
<rect x="316" y="104" width="1" height="1" fill="#ff4000"/>
<rect x="317" y="104" width="1" height="1" fill="#ff4000"/>
<rect x="318" y="104" width="1" height="1" fill="#ff4000"/>
<rect x="319" y="104" width="1" height="1" fill="#ff4000"/>
<rect x="320" y="104" width="1" height="1" fill="#ff4000"/>
<rect x="321" y="104" width="1" height="1" fill="#ff4000"/>
<rect x="322" y="103" width="1" height="1" fill="#ff4000"/>
<rect x="323" y="103" width="1" height="1" fill="#ff4000"/>
<rect x="324" y="103" width="1" height="1" fill="#ff4000"/>
<rect x="325" y="103" width="1" height="1" fill="#ff4000"/>
<rect x="326" y="103" width="1" height="1" fill="#ff4000"/>
<rect x="327" y="103" width="1" height="1" fill="#ff4000"/>
<rect x="328" y="103" width="1" height="1" fill="#ff4000"/>
<rect x="329" y="103" width="1" height="1" fill="#ff4000"/>
<rect x="330" y="103" width="1" height="1" fill="#ff4000"/>
<rect x="331" y="103" width="1" height="1" fill="#ff4000"/>
<rect x="332" y="103" width="1" height="1" fill="#ff4000"/>
<rect x="333" y="103" width="1" height="1" fill="#ff4000"/>
<rect x="334" y="103" width="1" height="1" fill="#ff4000"/>
<rect x="335" y="103" width="1" height="1" fill="#ff4000"/>
<rect x="336" y="103" width="1" height="1" fill="#ff4000"/>
<rect x="337" y="103" width="1" height="1" fill="#ff4000"/>
<rect x="338" y="103" width="1" height="1" fill="#ff4000"/>
<rect x="339" y="103" width="1" height="1" fill="#ff4000"/>
<rect x="340" y="103" width="1" height="1" fill="#ff4000"/>
<rect x="341" y="103" width="1" height="1" fill="#ff4000"/>
<rect x="342" y="103" width="1" height="1" fill="#ff4000"/>
<rect x="343" y="103" width="1" height="1" fill="#ff4000"/>
<rect x="344" y="103" width="1" height="1" fill="#ff4000"/>
<rect x="345" y="103" width="1" height="1" fill="#ff4000"/>
<rect x="346" y="103" width="1" height="1" fill="#ff4000"/>
<rect x="347" y="103" width="1" height="1" fill="#ff4000"/>
<rect x="348" y="103" width="1" height="1" fill="#ff4000"/>
<rect x="349" y="103" width="1" height="1" fill="#ff4000"/>
<rect x="350" y="103" width="1" height="1" fill="#ff4000"/>
<rect x="351" y="103" width="1" height="1" fill="#ff4000"/>
<rect x="352" y="103" width="1" height="1" fill="#ff4000"/>
<rect x="353" y="103" width="1" height="1" fill="#ff4000"/>
<rect x="354" y="103" width="1" height="1" fill="#ff4000"/>
<rect x="355" y="103" width="1" height="1" fill="#ff4000"/>
<rect x="356" y="103" width="1" height="1" fill="#ff4000"/>
<rect x="357" y="103" width="1" height="1" fill="#ff4000"/>
<rect x="358" y="103" width="1" height="1" fill="#ff4000"/>
<rect x="359" y="103" width="1" height="1" fill="#ff4000"/>
<rect x="360" y="103" width="1" height="1" fill="#ff4000"/>
<rect x="361" y="103" width="1" height="1" fill="#ff4000"/>
<rect x="362" y="103" width="1" height="1" fill="#ff4000"/>
<rect x="363" y="103" width="1" height="1" fill="#ff4000"/>
<rect x="364" y="102" width="1" height="1" fill="#ff4000"/>
<rect x="365" y="102" width="1" height="1" fill="#ff4000"/>
<rect x="366" y="103" width="1" height="1" fill="#ff4000"/>
<rect x="367" y="103" width="1" height="1" fill="#ff4000"/>
<rect x="368" y="102" width="1" height="1" fill="#ff4000"/>
<rect x="369" y="102" width="1" height="1" fill="#ff4000"/>
<rect x="370" y="102" width="1" height="1" fill="#ff4000"/>
<rect x="371" y="102" width="1" height="1" fill="#ff4000"/>
<rect x="372" y="102" width="1" height="1" fill="#ff4000"/>
<rect x="373" y="102" width="1" height="1" fill="#ff4000"/>
<rect x="374" y="102" width="1" height="1" fill="#ff4000"/>
<rect x="375" y="102" width="1" height="1" fill="#ff4000"/>
<rect x="376" y="102" width="1" height="1" fill="#ff4000"/>
<rect x="377" y="102" width="1" height="1" fill="#ff4000"/>
<rect x="378" y="102" width="1" height="1" fill="#ff4000"/>
<rect x="379" y="102" width="1" height="1" fill="#ff4000"/>
<rect x="380" y="102" width="1" height="1" fill="#ff4000"/>
<rect x="381" y="102" width="1" height="1" fill="#ff4000"/>
<rect x="382" y="102" width="1" height="1" fill="#ff4000"/>
<rect x="383" y="102" width="1" height="1" fill="#ff4000"/>
<rect x="384" y="102" width="1" height="1" fill="#ff4000"/>
<rect x="385" y="102" width="1" height="1" fill="#ff4000"/>
<rect x="386" y="102" width="1" height="1" fill="#ff4000"/>
<rect x="387" y="102" width="1" height="1" fill="#ff4000"/>
<rect x="388" y="102" width="1" height="1" fill="#ff4000"/>
<rect x="389" y="102" width="1" height="1" fill="#ff4000"/>
<rect x="390" y="102" width="1" height="1" fill="#ff4000"/>
<rect x="391" y="102" width="1" height="1" fill="#ff4000"/>
<rect x="392" y="102" width="1" height="1" fill="#ff4000"/>
<rect x="393" y="102" width="1" height="1" fill="#ff4000"/>
<rect x="394" y="102" width="1" height="1" fill="#ff4000"/>
<rect x="395" y="102" width="1" height="1" fill="#ff4000"/>
<rect x="396" y="102" width="1" height="1" fill="#ff4000"/>
<rect x="397" y="102" width="1" height="1" fill="#ff4000"/>
<rect x="398" y="102" width="1" height="1" fill="#ff4000"/>
<rect x="399" y="102" width="1" height="1" fill="#ff4000"/>
<rect x="400" y="102" width="1" height="1" fill="#ff4000"/>
<rect x="401" y="102" width="1" height="1" fill="#ff4000"/>
<rect x="402" y="102" width="1" height="1" fill="#ff4000"/>
<rect x="403" y="102" width="1" height="1" fill="#ff4000"/>
<rect x="404" y="102" width="1" height="1" fill="#ff4000"/>
<rect x="405" y="102" width="1" height="1" fill="#ff4000"/>
<rect x="406" y="102" width="1" height="1" fill="#ff4000"/>
<rect x="407" y="102" width="1" height="1" fill="#ff4000"/>
<rect x="408" y="102" width="1" height="1" fill="#ff4000"/>
<rect x="409" y="102" width="1" height="1" fill="#ff4000"/>
<rect x="410" y="102" width="1" height="1" fill="#ff4000"/>
<rect x="411" y="102" width="1" height="1" fill="#ff4000"/>
<rect x="412" y="102" width="1" height="1" fill="#ff4000"/>
<rect x="413" y="102" width="1" height="1" fill="#ff4000"/>
<rect x="414" y="102" width="1" height="1" fill="#ff4000"/>
<rect x="415" y="102" width="1" height="1" fill="#ff4000"/>
<rect x="416" y="102" width="1" height="1" fill="#ff4000"/>
<rect x="417" y="101" width="1" height="1" fill="#ff4000"/>
<rect x="418" y="101" width="1" height="1" fill="#ff4000"/>
<rect x="419" y="102" width="1" height="1" fill="#ff4000"/>
<rect x="420" y="102" width="1" height="1" fill="#ff4000"/>
<rect x="421" y="101" width="1" height="1" fill="#ff4000"/>
<rect x="422" y="101" width="1" height="1" fill="#ff4000"/>
<rect x="423" y="101" width="1" height="1" fill="#ff4000"/>
<rect x="424" y="101" width="1" height="1" fill="#ff4000"/>
<rect x="425" y="101" width="1" height="1" fill="#ff4000"/>
<rect x="426" y="101" width="1" height="1" fill="#ff4000"/>
<rect x="427" y="101" width="1" height="1" fill="#ff4000"/>
<rect x="428" y="101" width="1" height="1" fill="#ff4000"/>
<rect x="429" y="101" width="1" height="1" fill="#ff4000"/>
<rect x="430" y="101" width="1" height="1" fill="#ff4000"/>
<rect x="431" y="101" width="1" height="1" fill="#ff4000"/>
<rect x="432" y="101" width="1" height="1" fill="#ff4000"/>
<rect x="433" y="101" width="1" height="1" fill="#ff4000"/>
<rect x="434" y="101" width="1" height="1" fill="#ff4000"/>
<rect x="435" y="101" width="1" height="1" fill="#ff4000"/>
<rect x="436" y="101" width="1" height="1" fill="#ff4000"/>
<rect x="437" y="101" width="1" height="1" fill="#ff4000"/>
<rect x="438" y="101" width="1" height="1" fill="#ff4000"/>
<rect x="439" y="101" width="1" height="1" fill="#ff4000"/>
<rect x="440" y="101" width="1" height="1" fill="#ff4000"/>
<rect x="441" y="101" width="1" height="1" fill="#ff4000"/>
<rect x="442" y="101" width="1" height="1" fill="#ff4000"/>
<rect x="443" y="101" width="1" height="1" fill="#ff4000"/>
<rect x="444" y="101" width="1" height="1" fill="#ff4000"/>
<rect x="445" y="101" width="1" height="1" fill="#ff4000"/>
<rect x="446" y="101" width="1" height="1" fill="#ff4000"/>
<rect x="447" y="101" width="1" height="1" fill="#ff4000"/>
<rect x="448" y="101" width="1" height="1" fill="#ff4000"/>
<rect x="449" y="101" width="1" height="1" fill="#ff4000"/>
<rect x="450" y="101" width="1" height="1" fill="#ff4000"/>
<rect x="451" y="101" width="1" height="1" fill="#ff4000"/>
<rect x="452" y="101" width="1" height="1" fill="#ff4000"/>
<rect x="453" y="101" width="1" height="1" fill="#ff4000"/>
<rect x="454" y="101" width="1" height="1" fill="#ff4000"/>
<rect x="455" y="101" width="1" height="1" fill="#ff4000"/>
<rect x="456" y="101" width="1" height="1" fill="#ff4000"/>
<rect x="457" y="101" width="1" height="1" fill="#ff4000"/>
<rect x="458" y="101" width="1" height="1" fill="#ff4000"/>
<rect x="459" y="101" width="1" height="1" fill="#ff4000"/>
<rect x="460" y="101" width="1" height="1" fill="#ff4000"/>
<rect x="461" y="101" width="1" height="1" fill="#ff4000"/>
<rect x="462" y="101" width="1" height="1" fill="#ff4000"/>
<rect x="463" y="101" width="1" height="1" fill="#ff4000"/>
<rect x="464" y="101" width="1" height="1" fill="#ff4000"/>
<rect x="465" y="101" width="1" height="1" fill="#ff4000"/>
<rect x="468" y="3" width="1" height="161" fill="#ff4000"/>
<rect x="468" y="167" width="1" height="161" fill="#ff4000"/>
<rect x="30" y="264" width="1" height="64" fill="#ffff00"/>
<rect x="34" y="296" width="1" height="32" fill="#ffff00"/>
<rect x="35" y="280" width="1" height="48" fill="#ffff00"/>
<rect x="36" y="296" width="1" height="32" fill="#ffff00"/>
<rect x="37" y="280" width="1" height="48" fill="#ffff00"/>
<rect x="38" y="216" width="1" height="112" fill="#ffff00"/>
<rect x="39" y="280" width="1" height="48" fill="#ffff00"/>
<rect x="41" y="312" width="1" height="16" fill="#ffff00"/>
<rect x="43" y="280" width="1" height="48" fill="#ffff00"/>
<rect x="56" y="232" width="1" height="96" fill="#ffff00"/>
<rect x="57" y="312" width="1" height="16" fill="#ffff00"/>
<rect x="58" y="312" width="1" height="16" fill="#ffff00"/>
<rect x="62" y="296" width="1" height="32" fill="#ffff00"/>
<rect x="79" y="280" width="1" height="48" fill="#ffff00"/>
<rect x="90" y="312" width="1" height="16" fill="#ffff00"/>
<rect x="95" y="296" width="1" height="32" fill="#ffff00"/>
<rect x="99" y="280" width="1" height="48" fill="#ffff00"/>
<rect x="113" y="312" width="1" height="16" fill="#ffff00"/>
<rect x="125" y="280" width="1" height="48" fill="#ffff00"/>
<rect x="129" y="280" width="1" height="48" fill="#ffff00"/>
<rect x="139" y="312" width="1" height="16" fill="#ffff00"/>
<rect x="141" y="312" width="1" height="16" fill="#ffff00"/>
<rect x="184" y="296" width="1" height="32" fill="#ffff00"/>
<rect x="194" y="280" width="1" height="48" fill="#ffff00"/>
<rect x="200" y="312" width="1" height="16" fill="#ffff00"/>
<rect x="204" y="280" width="1" height="48" fill="#ffff00"/>
<rect x="208" y="280" width="1" height="48" fill="#ffff00"/>
<rect x="221" y="280" width="1" height="48" fill="#ffff00"/>
<rect x="250" y="280" width="1" height="48" fill="#ffff00"/>
<rect x="255" y="280" width="1" height="48" fill="#ffff00"/>
<rect x="258" y="280" width="1" height="48" fill="#ffff00"/>
<rect x="262" y="280" width="1" height="48" fill="#ffff00"/>
<rect x="263" y="312" width="1" height="16" fill="#ffff00"/>
<rect x="266" y="280" width="1" height="48" fill="#ffff00"/>
<rect x="268" y="280" width="1" height="48" fill="#ffff00"/>
<rect x="279" y="280" width="1" height="48" fill="#ffff00"/>
<rect x="281" y="264" width="1" height="64" fill="#ffff00"/>
<rect x="284" y="280" width="1" height="48" fill="#ffff00"/>
<rect x="291" y="280" width="1" height="48" fill="#ffff00"/>
<rect x="307" y="280" width="1" height="48" fill="#ffff00"/>
<rect x="319" y="280" width="1" height="48" fill="#ffff00"/>
<rect x="320" y="280" width="1" height="48" fill="#ffff00"/>
<rect x="321" y="280" width="1" height="48" fill="#ffff00"/>
<rect x="325" y="280" width="1" height="48" fill="#ffff00"/>
<rect x="329" y="280" width="1" height="48" fill="#ffff00"/>
<rect x="340" y="280" width="1" height="48" fill="#ffff00"/>
<rect x="359" y="280" width="1" height="48" fill="#ffff00"/>
<rect x="366" y="296" width="1" height="32" fill="#ffff00"/>
<rect x="367" y="280" width="1" height="48" fill="#ffff00"/>
<rect x="380" y="280" width="1" height="48" fill="#ffff00"/>
<rect x="383" y="280" width="1" height="48" fill="#ffff00"/>
<rect x="386" y="280" width="1" height="48" fill="#ffff00"/>
<rect x="395" y="280" width="1" height="48" fill="#ffff00"/>
<rect x="399" y="280" width="1" height="48" fill="#ffff00"/>
<rect x="401" y="280" width="1" height="48" fill="#ffff00"/>
<rect x="402" y="264" width="1" height="64" fill="#ffff00"/>
<rect x="410" y="280" width="1" height="48" fill="#ffff00"/>
<rect x="414" y="280" width="1" height="48" fill="#ffff00"/>
<rect x="415" y="312" width="1" height="16" fill="#ffff00"/>
<rect x="420" y="280" width="1" height="48" fill="#ffff00"/>
<rect x="423" y="280" width="1" height="48" fill="#ffff00"/>
<rect x="433" y="280" width="1" height="48" fill="#ffff00"/>
<rect x="436" y="280" width="1" height="48" fill="#ffff00"/>
<rect x="440" y="312" width="1" height="16" fill="#ffff00"/>
<rect x="451" y="312" width="1" height="16" fill="#ffff00"/>
<rect x="465" y="280" width="1" height="48" fill="#ffff00"/>
<rect x="466" y="296" width="1" height="32" fill="#ffff00"/>
<rect x="584" y="21" width="158" height="1" fill="#929296"/>
<rect x="584" y="21" width="1" height="18" fill="#929296"/>
<rect x="585" y="22" width="156" height="1" fill="#6a6a6e"/>
<rect x="585" y="22" width="1" height="16" fill="#6a6a6e"/>
<rect x="584" y="38" width="158" height="1" fill="#ffffff"/>
<rect x="741" y="21" width="1" height="18" fill="#ffffff"/>
<rect x="585" y="37" width="156" height="1" fill="#ffffff"/>
<rect x="740" y="22" width="1" height="16" fill="#ffffff"/>
<rect x="584" y="45" width="82" height="1" fill="#929296"/>
<rect x="584" y="45" width="1" height="18" fill="#929296"/>
<rect x="585" y="46" width="80" height="1" fill="#6a6a6e"/>
<rect x="585" y="46" width="1" height="16" fill="#6a6a6e"/>
<rect x="584" y="62" width="82" height="1" fill="#ffffff"/>
<rect x="665" y="45" width="1" height="18" fill="#ffffff"/>
<rect x="585" y="61" width="80" height="1" fill="#ffffff"/>
<rect x="664" y="46" width="1" height="16" fill="#ffffff"/>
<rect x="664" y="45" width="73" height="1" fill="#929296"/>
<rect x="664" y="45" width="1" height="18" fill="#929296"/>
<rect x="665" y="46" width="71" height="1" fill="#6a6a6e"/>
<rect x="665" y="46" width="1" height="16" fill="#6a6a6e"/>
<rect x="664" y="62" width="73" height="1" fill="#ffffff"/>
<rect x="736" y="45" width="1" height="18" fill="#ffffff"/>
<rect x="665" y="61" width="71" height="1" fill="#ffffff"/>
<rect x="735" y="46" width="1" height="16" fill="#ffffff"/>
<rect x="664" y="45" width="2" height="18" fill="#ffffff"/>
<rect x="664" y="45" width="1" height="1" fill="#9d9da1"/>
<rect x="665" y="45" width="1" height="1" fill="#9d9da1"/>
<rect x="664" y="46" width="1" height="1" fill="#716f64"/>
<rect x="512" y="9" width="219" height="1" fill="#9d9da1"/>
<rect x="513" y="10" width="218" height="1" fill="#ffffff"/>
<rect x="512" y="9" width="1" height="152" fill="#9d9da1"/>
<rect x="513" y="10" width="1" height="151" fill="#ffffff"/>
<rect x="512" y="160" width="219" height="1" fill="#9d9da1"/>
<rect x="512" y="161" width="220" height="1" fill="#ffffff"/>
<rect x="730" y="9" width="1" height="152" fill="#9d9da1"/>
<rect x="731" y="9" width="1" height="153" fill="#ffffff"/>
<rect x="519" y="9" width="127" height="2" fill="#e0dfe3"/>
<rect x="512" y="169" width="219" height="1" fill="#9d9da1"/>
<rect x="513" y="170" width="218" height="1" fill="#ffffff"/>
<rect x="512" y="169" width="1" height="162" fill="#9d9da1"/>
<rect x="513" y="170" width="1" height="161" fill="#ffffff"/>
<rect x="512" y="330" width="219" height="1" fill="#9d9da1"/>
<rect x="512" y="331" width="220" height="1" fill="#ffffff"/>
<rect x="730" y="169" width="1" height="162" fill="#9d9da1"/>
<rect x="731" y="169" width="1" height="163" fill="#ffffff"/>
<rect x="519" y="169" width="54" height="2" fill="#e0dfe3"/>
<circle cx="534.4" cy="82.4" r="6.6" fill="#00ff00" stroke="#141414" stroke-width="2" shape-rendering="auto"/>
<path d="M531.1999999999999 82.2 L533.8 79.60000000000001" stroke="#ffffff" stroke-width="1.4" stroke-linecap="round" shape-rendering="auto"/>
<circle cx="534.4" cy="101.5" r="6.6" fill="#ff3000" stroke="#141414" stroke-width="2" shape-rendering="auto"/>
<path d="M531.1999999999999 101.3 L533.8 98.7" stroke="#ffffff" stroke-width="1.4" stroke-linecap="round" shape-rendering="auto"/>
<g shape-rendering="auto"><circle cx="619.2" cy="80.2" r="5.7" fill="#ffffff"/><path d="M615.25 83.75 A5.3 5.3 0 0 1 622.75 76.25" fill="none" stroke="#6e6e72" stroke-width="1.5"/></g>
<clipPath id="c674_80"><rect x="672" y="72" width="20" height="16"/></clipPath>
<g shape-rendering="auto" clip-path="url(#c674_80)"><circle cx="674.2" cy="80.2" r="5.7" fill="#ffffff"/><path d="M670.25 83.75 A5.3 5.3 0 0 1 677.75 76.25" fill="none" stroke="#6e6e72" stroke-width="1.5"/><circle cx="674" cy="80" r="1.9" fill="#000"/></g>
<rect x="625" y="112" width="80" height="22" fill="#ffffff"/>
<rect x="625" y="112" width="80" height="1" fill="#929296"/>
<rect x="625" y="112" width="1" height="22" fill="#929296"/>
<rect x="626" y="113" width="78" height="1" fill="#6a6a6e"/>
<rect x="626" y="113" width="1" height="20" fill="#6a6a6e"/>
<rect x="625" y="133" width="80" height="1" fill="#ffffff"/>
<rect x="704" y="112" width="1" height="22" fill="#ffffff"/>
<rect x="626" y="132" width="78" height="1" fill="#ffffff"/>
<rect x="703" y="113" width="1" height="20" fill="#ffffff"/>
<rect x="686" y="114" width="17" height="18" fill="#e0dfe3"/>
<rect x="686" y="114" width="17" height="2" fill="#ffffff"/>
<rect x="686" y="114" width="2" height="18" fill="#ffffff"/>
<rect x="701" y="115" width="1" height="17" fill="#9d9da1"/>
<rect x="687" y="130" width="16" height="1" fill="#9d9da1"/>
<rect x="702" y="114" width="1" height="18" fill="#6a6a6e"/>
<rect x="686" y="131" width="17" height="1" fill="#6a6a6e"/>
<rect x="691" y="121" width="7" height="1" fill="#000"/>
<rect x="692" y="122" width="5" height="1" fill="#000"/>
<rect x="693" y="123" width="3" height="1" fill="#000"/>
<rect x="694" y="124" width="1" height="1" fill="#000"/>
<rect x="625" y="136" width="80" height="22" fill="#ffffff"/>
<rect x="625" y="136" width="80" height="1" fill="#929296"/>
<rect x="625" y="136" width="1" height="22" fill="#929296"/>
<rect x="626" y="137" width="78" height="1" fill="#6a6a6e"/>
<rect x="626" y="137" width="1" height="20" fill="#6a6a6e"/>
<rect x="625" y="157" width="80" height="1" fill="#ffffff"/>
<rect x="704" y="136" width="1" height="22" fill="#ffffff"/>
<rect x="626" y="156" width="78" height="1" fill="#ffffff"/>
<rect x="703" y="137" width="1" height="20" fill="#ffffff"/>
<rect x="686" y="138" width="17" height="18" fill="#e0dfe3"/>
<rect x="686" y="138" width="17" height="2" fill="#ffffff"/>
<rect x="686" y="138" width="2" height="18" fill="#ffffff"/>
<rect x="701" y="139" width="1" height="17" fill="#9d9da1"/>
<rect x="687" y="154" width="16" height="1" fill="#9d9da1"/>
<rect x="702" y="138" width="1" height="18" fill="#6a6a6e"/>
<rect x="686" y="155" width="17" height="1" fill="#6a6a6e"/>
<rect x="691" y="145" width="7" height="1" fill="#000"/>
<rect x="692" y="146" width="5" height="1" fill="#000"/>
<rect x="693" y="147" width="3" height="1" fill="#000"/>
<rect x="694" y="148" width="1" height="1" fill="#000"/>
<circle cx="535.4" cy="189.3" r="7.4" fill="#ffffff" shape-rendering="auto"/>
<circle cx="534.4" cy="188.3" r="7.4" fill="#909090" shape-rendering="auto"/>
<path d="M531.1999999999999 188.10000000000002 L533.8 185.5" stroke="#ffffff" stroke-width="1.4" stroke-linecap="round" shape-rendering="auto"/>
<circle cx="534.4" cy="207.4" r="6.6" fill="#ffff00" stroke="#141414" stroke-width="2" shape-rendering="auto"/>
<path d="M531.1999999999999 207.20000000000002 L533.8 204.6" stroke="#ffffff" stroke-width="1.4" stroke-linecap="round" shape-rendering="auto"/>
<g shape-rendering="auto"><circle cx="619.2" cy="187.2" r="5.7" fill="#ffffff"/><circle cx="619" cy="187" r="4.4" fill="#e0dfe3"/><path d="M615.25 190.75 A5.3 5.3 0 0 1 622.75 183.25" fill="none" stroke="#6e6e72" stroke-width="1.5"/><circle cx="619" cy="187" r="1.9" fill="#9d9da1"/></g>
<clipPath id="c674_187"><rect x="672" y="179" width="20" height="16"/></clipPath>
<g shape-rendering="auto" clip-path="url(#c674_187)"><circle cx="674.2" cy="187.2" r="5.7" fill="#ffffff"/><circle cx="674" cy="187" r="4.4" fill="#e0dfe3"/><path d="M670.25 190.75 A5.3 5.3 0 0 1 677.75 183.25" fill="none" stroke="#6e6e72" stroke-width="1.5"/></g>
<g shape-rendering="auto"><circle cx="619.2" cy="206.2" r="5.7" fill="#ffffff"/><path d="M615.25 209.75 A5.3 5.3 0 0 1 622.75 202.25" fill="none" stroke="#6e6e72" stroke-width="1.5"/></g>
<clipPath id="c674_206"><rect x="672" y="198" width="20" height="16"/></clipPath>
<g shape-rendering="auto" clip-path="url(#c674_206)"><circle cx="674.2" cy="206.2" r="5.7" fill="#ffffff"/><path d="M670.25 209.75 A5.3 5.3 0 0 1 677.75 202.25" fill="none" stroke="#6e6e72" stroke-width="1.5"/><circle cx="674" cy="206" r="1.9" fill="#000"/></g>
<rect x="625" y="224" width="80" height="22" fill="#ffffff"/>
<rect x="625" y="224" width="80" height="1" fill="#929296"/>
<rect x="625" y="224" width="1" height="22" fill="#929296"/>
<rect x="626" y="225" width="78" height="1" fill="#6a6a6e"/>
<rect x="626" y="225" width="1" height="20" fill="#6a6a6e"/>
<rect x="625" y="245" width="80" height="1" fill="#ffffff"/>
<rect x="704" y="224" width="1" height="22" fill="#ffffff"/>
<rect x="626" y="244" width="78" height="1" fill="#ffffff"/>
<rect x="703" y="225" width="1" height="20" fill="#ffffff"/>
<rect x="686" y="226" width="17" height="18" fill="#e0dfe3"/>
<rect x="686" y="226" width="17" height="2" fill="#ffffff"/>
<rect x="686" y="226" width="2" height="18" fill="#ffffff"/>
<rect x="701" y="227" width="1" height="17" fill="#9d9da1"/>
<rect x="687" y="242" width="16" height="1" fill="#9d9da1"/>
<rect x="702" y="226" width="1" height="18" fill="#6a6a6e"/>
<rect x="686" y="243" width="17" height="1" fill="#6a6a6e"/>
<rect x="691" y="233" width="7" height="1" fill="#000"/>
<rect x="692" y="234" width="5" height="1" fill="#000"/>
<rect x="693" y="235" width="3" height="1" fill="#000"/>
<rect x="694" y="236" width="1" height="1" fill="#000"/>
<rect x="625" y="247" width="80" height="22" fill="#e0dfe3"/>
<rect x="625" y="247" width="80" height="1" fill="#929296"/>
<rect x="625" y="247" width="1" height="22" fill="#929296"/>
<rect x="626" y="248" width="78" height="1" fill="#6a6a6e"/>
<rect x="626" y="248" width="1" height="20" fill="#6a6a6e"/>
<rect x="625" y="268" width="80" height="1" fill="#ffffff"/>
<rect x="704" y="247" width="1" height="22" fill="#ffffff"/>
<rect x="626" y="267" width="78" height="1" fill="#ffffff"/>
<rect x="703" y="248" width="1" height="20" fill="#ffffff"/>
<rect x="686" y="249" width="17" height="18" fill="#e0dfe3"/>
<rect x="686" y="249" width="17" height="2" fill="#ffffff"/>
<rect x="686" y="249" width="2" height="18" fill="#ffffff"/>
<rect x="701" y="250" width="1" height="17" fill="#9d9da1"/>
<rect x="687" y="265" width="16" height="1" fill="#9d9da1"/>
<rect x="702" y="249" width="1" height="18" fill="#6a6a6e"/>
<rect x="686" y="266" width="17" height="1" fill="#6a6a6e"/>
<rect x="692" y="257" width="7" height="1" fill="#ffffff"/>
<rect x="693" y="258" width="5" height="1" fill="#ffffff"/>
<rect x="694" y="259" width="3" height="1" fill="#ffffff"/>
<rect x="695" y="260" width="1" height="1" fill="#ffffff"/>
<rect x="691" y="256" width="7" height="1" fill="#9d9da1"/>
<rect x="692" y="257" width="5" height="1" fill="#9d9da1"/>
<rect x="693" y="258" width="3" height="1" fill="#9d9da1"/>
<rect x="694" y="259" width="1" height="1" fill="#9d9da1"/>
<rect x="513" y="335" width="215" height="16" fill="#a8acc6"/>
<rect x="513" y="335" width="215" height="1" fill="#9d9da1"/>
<rect x="513" y="335" width="1" height="16" fill="#9d9da1"/>
<rect x="513" y="350" width="215" height="1" fill="#ffffff"/>
<rect x="727" y="335" width="1" height="16" fill="#ffffff"/>
<rect x="550" y="361" width="48" height="23" fill="#e0dfe3"/>
<rect x="550" y="361" width="47" height="1" fill="#ffffff"/>
<rect x="550" y="361" width="1" height="22" fill="#ffffff"/>
<rect x="550" y="383" width="48" height="1" fill="#6a6a6e"/>
<rect x="597" y="361" width="1" height="23" fill="#6a6a6e"/>
<rect x="551" y="382" width="46" height="1" fill="#9d9da1"/>
<rect x="596" y="362" width="1" height="21" fill="#9d9da1"/>
<rect x="551" y="362" width="45" height="1" fill="#ffffff"/>
<rect x="551" y="362" width="1" height="20" fill="#ffffff"/>
<rect x="562" y="377" width="7" height="1" fill="#000"/>
<rect x="668" y="361" width="48" height="23" fill="#e0dfe3"/>
<rect x="668" y="361" width="47" height="1" fill="#ffffff"/>
<rect x="668" y="361" width="1" height="22" fill="#ffffff"/>
<rect x="668" y="383" width="48" height="1" fill="#6a6a6e"/>
<rect x="715" y="361" width="1" height="23" fill="#6a6a6e"/>
<rect x="669" y="382" width="46" height="1" fill="#9d9da1"/>
<rect x="714" y="362" width="1" height="21" fill="#9d9da1"/>
<rect x="669" y="362" width="45" height="1" fill="#ffffff"/>
<rect x="669" y="362" width="1" height="20" fill="#ffffff"/>
<rect x="688" y="377" width="3" height="1" fill="#000"/>
<rect x="5" y="394" width="335" height="21" fill="#ffffff"/>
<rect x="5" y="394" width="335" height="1" fill="#929296"/>
<rect x="5" y="394" width="1" height="21" fill="#929296"/>
<rect x="6" y="395" width="333" height="1" fill="#6a6a6e"/>
<rect x="6" y="395" width="1" height="19" fill="#6a6a6e"/>
<rect x="5" y="414" width="335" height="1" fill="#ffffff"/>
<rect x="339" y="394" width="1" height="21" fill="#ffffff"/>
<rect x="6" y="413" width="333" height="1" fill="#ffffff"/>
<rect x="338" y="395" width="1" height="19" fill="#ffffff"/>
<rect x="321" y="396" width="17" height="17" fill="#e0dfe3"/>
<rect x="321" y="396" width="17" height="2" fill="#ffffff"/>
<rect x="321" y="396" width="2" height="17" fill="#ffffff"/>
<rect x="336" y="397" width="1" height="16" fill="#9d9da1"/>
<rect x="322" y="411" width="16" height="1" fill="#9d9da1"/>
<rect x="337" y="396" width="1" height="17" fill="#6a6a6e"/>
<rect x="321" y="412" width="17" height="1" fill="#6a6a6e"/>
<rect x="326" y="403" width="7" height="1" fill="#000"/>
<rect x="327" y="404" width="5" height="1" fill="#000"/>
<rect x="328" y="405" width="3" height="1" fill="#000"/>
<rect x="329" y="406" width="1" height="1" fill="#000"/>
<rect x="370" y="409" width="7" height="1" fill="#000"/>
<rect x="435" y="394" width="300" height="21" fill="#ffffff"/>
<rect x="435" y="394" width="300" height="1" fill="#929296"/>
<rect x="435" y="394" width="1" height="21" fill="#929296"/>
<rect x="436" y="395" width="298" height="1" fill="#6a6a6e"/>
<rect x="436" y="395" width="1" height="19" fill="#6a6a6e"/>
<rect x="435" y="414" width="300" height="1" fill="#ffffff"/>
<rect x="734" y="394" width="1" height="21" fill="#ffffff"/>
<rect x="436" y="413" width="298" height="1" fill="#ffffff"/>
<rect x="733" y="395" width="1" height="19" fill="#ffffff"/>
<rect x="716" y="396" width="17" height="17" fill="#e0dfe3"/>
<rect x="716" y="396" width="17" height="2" fill="#ffffff"/>
<rect x="716" y="396" width="2" height="17" fill="#ffffff"/>
<rect x="731" y="397" width="1" height="16" fill="#9d9da1"/>
<rect x="717" y="411" width="16" height="1" fill="#9d9da1"/>
<rect x="732" y="396" width="1" height="17" fill="#6a6a6e"/>
<rect x="716" y="412" width="17" height="1" fill="#6a6a6e"/>
<rect x="721" y="403" width="7" height="1" fill="#000"/>
<rect x="722" y="404" width="5" height="1" fill="#000"/>
<rect x="723" y="405" width="3" height="1" fill="#000"/>
<rect x="724" y="406" width="1" height="1" fill="#000"/>
<rect x="740" y="0" width="2" height="420" fill="#f4f4f6"/>
<text x="25.5" y="11" text-anchor="end" fill="#000" color="#000" font-size="10.9" font-family='"Liberation Sans", sans-serif' >80</text>
<text x="25.5" y="51" text-anchor="end" fill="#000" color="#000" font-size="10.9" font-family='"Liberation Sans", sans-serif' >60</text>
<text x="25.5" y="91" text-anchor="end" fill="#000" color="#000" font-size="10.9" font-family='"Liberation Sans", sans-serif' >40</text>
<text x="25.5" y="131" text-anchor="end" fill="#000" color="#000" font-size="10.9" font-family='"Liberation Sans", sans-serif' >20</text>
<text x="25.5" y="171" text-anchor="end" fill="#000" color="#000" font-size="10.9" font-family='"Liberation Sans", sans-serif' >10</text>
<text x="25.5" y="211" text-anchor="end" fill="#000" color="#000" font-size="10.9" font-family='"Liberation Sans", sans-serif' >7.5</text>
<text x="25.6" y="251" text-anchor="end" fill="#000" color="#000" font-size="10.9" font-family='"Liberation Sans", sans-serif' >5</text>
<text x="25.6" y="291" text-anchor="end" fill="#000" color="#000" font-size="10.9" font-family='"Liberation Sans", sans-serif' >2.5</text>
<text transform="translate(484.60 11.80) scale(1.0017 1)" fill="#000" color="#000" font-size="10.9" font-family='"Liberation Sans", sans-serif'>16x</text>
<text transform="translate(484.60 51.80) scale(1.0017 1)" fill="#000" color="#000" font-size="10.9" font-family='"Liberation Sans", sans-serif'>12x</text>
<text transform="translate(484.60 91.80) scale(0.9991 1)" fill="#000" color="#000" font-size="10.9" font-family='"Liberation Sans", sans-serif'>8x</text>
<text transform="translate(484.60 131.80) scale(0.9991 1)" fill="#000" color="#000" font-size="10.9" font-family='"Liberation Sans", sans-serif'>4x</text>
<text transform="translate(111.60 341.70) scale(0.9399 1)" fill="#000" color="#000" font-size="10.9" font-family='"Liberation Sans", sans-serif'>1GB</text>
<text transform="translate(211.80 341.70) scale(0.9445 1)" fill="#000" color="#000" font-size="10.9" font-family='"Liberation Sans", sans-serif'>2GB</text>
<text transform="translate(312.10 341.70) scale(0.9216 1)" fill="#000" color="#000" font-size="10.9" font-family='"Liberation Sans", sans-serif'>3GB</text>
<text transform="translate(412.00 341.70) scale(0.9399 1)" fill="#000" color="#000" font-size="10.9" font-family='"Liberation Sans", sans-serif'>4GB</text>
<text transform="translate(42.60 362.60) scale(0.9376 1)" fill="#000" color="#000" font-size="10.9" font-family='"Liberation Sans", sans-serif'>PI Total</text>
<text transform="translate(45.60 376.90) scale(0.9765 1)" fill="#000" color="#000" font-size="10.9" font-family='"Liberation Sans", sans-serif'>99649</text>
<text transform="translate(108.50 362.60) scale(0.8797 1)" fill="#000" color="#000" font-size="10.9" font-family='"Liberation Sans", sans-serif'>PI Peak</text>
<text transform="translate(120.80 376.90) scale(0.9323 1)" fill="#000" color="#000" font-size="10.9" font-family='"Liberation Sans", sans-serif'>42</text>
<text transform="translate(170.80 362.60) scale(0.9771 1)" fill="#000" color="#000" font-size="10.9" font-family='"Liberation Sans", sans-serif'>PI Avg</text>
<text transform="translate(185.80 376.90) scale(0.9323 1)" fill="#000" color="#000" font-size="10.9" font-family='"Liberation Sans", sans-serif'>16</text>
<text transform="translate(233.60 362.60) scale(0.9518 1)" fill="#000" color="#000" font-size="10.9" font-family='"Liberation Sans", sans-serif'>PO Total</text>
<text transform="translate(248.70 376.90) scale(0.9625 1)" fill="#000" color="#000" font-size="10.9" font-family='"Liberation Sans", sans-serif'>408</text>
<text transform="translate(295.60 362.60) scale(0.9073 1)" fill="#000" color="#000" font-size="10.9" font-family='"Liberation Sans", sans-serif'>PO Peak</text>
<text transform="translate(320.60 376.90) scale(0.8250 1)" fill="#000" color="#000" font-size="10.9" font-family='"Liberation Sans", sans-serif'>7</text>
<text transform="translate(371.60 362.60) scale(0.9955 1)" fill="#000" color="#000" font-size="10.9" font-family='"Liberation Sans", sans-serif'>PO Avg</text>
<text transform="translate(386.90 376.90) scale(0.7920 1)" fill="#000" color="#000" font-size="10.9" font-family='"Liberation Sans", sans-serif'>0</text>
<text transform="translate(641.70 34.00) scale(0.9434 1)" fill="#000" color="#000" font-size="10.9" font-family='"Liberation Sans", sans-serif'>MXLRG03</text>
<text transform="translate(608.70 58.00) scale(0.9357 1)" fill="#000" color="#000" font-size="10.9" font-family='"Liberation Sans", sans-serif'>DVD-R</text>
<text transform="translate(679.80 58.00) scale(0.9328 1)" fill="#000" color="#000" font-size="10.9" font-family='"Liberation Sans", sans-serif'>DVD-R</text>
<text transform="translate(520.30 12.70) scale(0.9476 1)" fill="#000" color="#000" font-size="10.9" font-family='"Liberation Sans", sans-serif'>PIE (8ECC) / Speed Graph</text>
<text transform="translate(520.50 172.70) scale(0.9254 1)" fill="#000" color="#000" font-size="10.9" font-family='"Liberation Sans", sans-serif'>PO (8ECC)</text>
<text transform="translate(518.40 36.00) scale(0.9193 1)" fill="#000" color="#000" font-size="10.9" font-family='"Liberation Sans", sans-serif'>MID Code</text>
<text transform="translate(518.80 60.00) scale(0.9743 1)" fill="#000" color="#000" font-size="10.9" font-family='"Liberation Sans", sans-serif'>Type/Book</text>
<text transform="translate(552.80 85.50) scale(0.9507 1)" fill="#000" color="#000" font-size="10.9" font-family='"Liberation Sans", sans-serif'>Show PIE</text>
<text transform="translate(552.80 104.70) scale(1.0062 1)" fill="#000" color="#000" font-size="10.9" font-family='"Liberation Sans", sans-serif'>Show Speed</text>
<text transform="translate(629.30 84.70) scale(0.9655 1)" fill="#000" color="#000" font-size="10.9" font-family='"Liberation Sans", sans-serif'>Line</text>
<text transform="translate(685.20 84.70) scale(1.0044 1)" fill="#000" color="#000" font-size="10.9" font-family='"Liberation Sans", sans-serif'>Vertical</text>
<text transform="translate(523.60 128.00) scale(0.9642 1)" fill="#000" color="#000" font-size="10.9" font-family='"Liberation Sans", sans-serif'>PIE Scale (Left)</text>
<text transform="translate(524.60 150.80) scale(1.0221 1)" fill="#000" color="#000" font-size="10.9" font-family='"Liberation Sans", sans-serif'>Speed / Accuracy</text>
<text transform="translate(629.00 127.00) scale(0.9540 1)" fill="#000" color="#000" font-size="10.9" font-family='"Liberation Sans", sans-serif'>Auto Peak</text>
<text transform="translate(629.00 151.00) scale(0.9592 1)" fill="#000" color="#000" font-size="10.9" font-family='"Liberation Sans", sans-serif'>Balanced</text>
<text class="d" transform="translate(556.00 192.50) scale(0.9961 1)" fill="#ffffff" color="#ffffff" font-size="10.9" font-family='"Liberation Sans", sans-serif'>Show Jitter</text>
<text class="e" transform="translate(555.00 191.50) scale(0.9961 1)" fill="#8e8e93" color="#8e8e93" font-size="10.9" font-family='"Liberation Sans", sans-serif'>Show Jitter</text>
<text transform="translate(555.00 211.50) scale(0.9730 1)" fill="#000" color="#000" font-size="10.9" font-family='"Liberation Sans", sans-serif'>Show PO</text>
<text class="d" transform="translate(630.90 192.50) scale(0.9596 1)" fill="#ffffff" color="#ffffff" font-size="10.9" font-family='"Liberation Sans", sans-serif'>Instant</text>
<text class="e" transform="translate(629.90 191.50) scale(0.9596 1)" fill="#8e8e93" color="#8e8e93" font-size="10.9" font-family='"Liberation Sans", sans-serif'>Instant</text>
<text class="d" transform="translate(686.30 192.50) scale(1.0196 1)" fill="#ffffff" color="#ffffff" font-size="10.9" font-family='"Liberation Sans", sans-serif'>Average</text>
<text class="e" transform="translate(685.30 191.50) scale(1.0196 1)" fill="#8e8e93" color="#8e8e93" font-size="10.9" font-family='"Liberation Sans", sans-serif'>Average</text>
<text transform="translate(629.30 211.50) scale(0.9655 1)" fill="#000" color="#000" font-size="10.9" font-family='"Liberation Sans", sans-serif'>Line</text>
<text transform="translate(685.20 211.50) scale(1.0044 1)" fill="#000" color="#000" font-size="10.9" font-family='"Liberation Sans", sans-serif'>Vertical</text>
<text transform="translate(524.40 239.60) scale(0.9958 1)" fill="#000" color="#000" font-size="10.9" font-family='"Liberation Sans", sans-serif'>PO Scale (Left)</text>
<text class="d" transform="translate(526.20 264.40) scale(0.9682 1)" fill="#ffffff" color="#ffffff" font-size="10.9" font-family='"Liberation Sans", sans-serif'>Jitter Scale (Right)</text>
<text class="e" transform="translate(525.20 263.40) scale(0.9682 1)" fill="#8e8e93" color="#8e8e93" font-size="10.9" font-family='"Liberation Sans", sans-serif'>Jitter Scale (Right)</text>
<text transform="translate(629.00 239.00) scale(0.9540 1)" fill="#000" color="#000" font-size="10.9" font-family='"Liberation Sans", sans-serif'>Auto Peak</text>
<text class="d" transform="translate(630.00 263.00) scale(0.9540 1)" fill="#ffffff" color="#ffffff" font-size="10.9" font-family='"Liberation Sans", sans-serif'>Auto Peak</text>
<text class="e" transform="translate(629.00 262.00) scale(0.9540 1)" fill="#8e8e93" color="#8e8e93" font-size="10.9" font-family='"Liberation Sans", sans-serif'>Auto Peak</text>
<text transform="translate(529.80 293.00) scale(0.9628 1)" fill="#000" color="#000" font-size="10.9" font-family='"Liberation Sans", sans-serif'>Current</text>
<text transform="translate(533.40 306.90) scale(0.9629 1)" fill="#000" color="#000" font-size="10.9" font-family='"Liberation Sans", sans-serif'>23127F</text>
<text transform="translate(594.50 293.00) scale(0.9837 1)" fill="#000" color="#000" font-size="10.9" font-family='"Liberation Sans", sans-serif'>Max LBA</text>
<text transform="translate(598.60 306.90) scale(0.9629 1)" fill="#000" color="#000" font-size="10.9" font-family='"Liberation Sans", sans-serif'>23127F</text>
<text class="d" transform="translate(660.70 294.00) scale(1.0216 1)" fill="#ffffff" color="#ffffff" font-size="10.9" font-family='"Liberation Sans", sans-serif'>Jitter Avg</text>
<text class="e" transform="translate(659.70 293.00) scale(1.0216 1)" fill="#8e8e93" color="#8e8e93" font-size="10.9" font-family='"Liberation Sans", sans-serif'>Jitter Avg</text>
<text class="d" transform="translate(679.70 307.90) scale(0.8745 1)" fill="#ffffff" color="#ffffff" font-size="10.9" font-family='"Liberation Sans", sans-serif'>0</text>
<text class="e" transform="translate(678.70 306.90) scale(0.8745 1)" fill="#8e8e93" color="#8e8e93" font-size="10.9" font-family='"Liberation Sans", sans-serif'>0</text>
<text transform="translate(581.50 347.00) scale(0.9761 1)" fill="#ffffff" color="#ffffff" font-size="10.9" font-family='"Liberation Sans", sans-serif'>100% Complete</text>
<text transform="translate(561.80 375.70) scale(0.9774 1)" fill="#000" color="#000" font-size="10.9" font-family='"Liberation Sans", sans-serif'>Start</text>
<text transform="translate(680.60 375.70) scale(0.9723 1)" fill="#000" color="#000" font-size="10.9" font-family='"Liberation Sans", sans-serif'>Stop</text>
<text x="10" y="408.9" text-anchor="start" fill="#000" color="#000" font-size="13.33" font-family='"Liberation Mono", monospace' xml:space="preserve">PIONEER DVD-RW  DVR-108  (M:)</text>
<text transform="translate(370.00 407.80) scale(1.0036 1)" fill="#000" color="#000" font-size="10.9" font-family='"Liberation Sans", sans-serif'>Refresh</text>
<text x="519.6" y="408.9" text-anchor="start" fill="#000" color="#000" font-size="13.33" font-family='"Liberation Mono", monospace' xml:space="preserve">ADVANCED COMMANDS</text>
</svg>
</body></html>
